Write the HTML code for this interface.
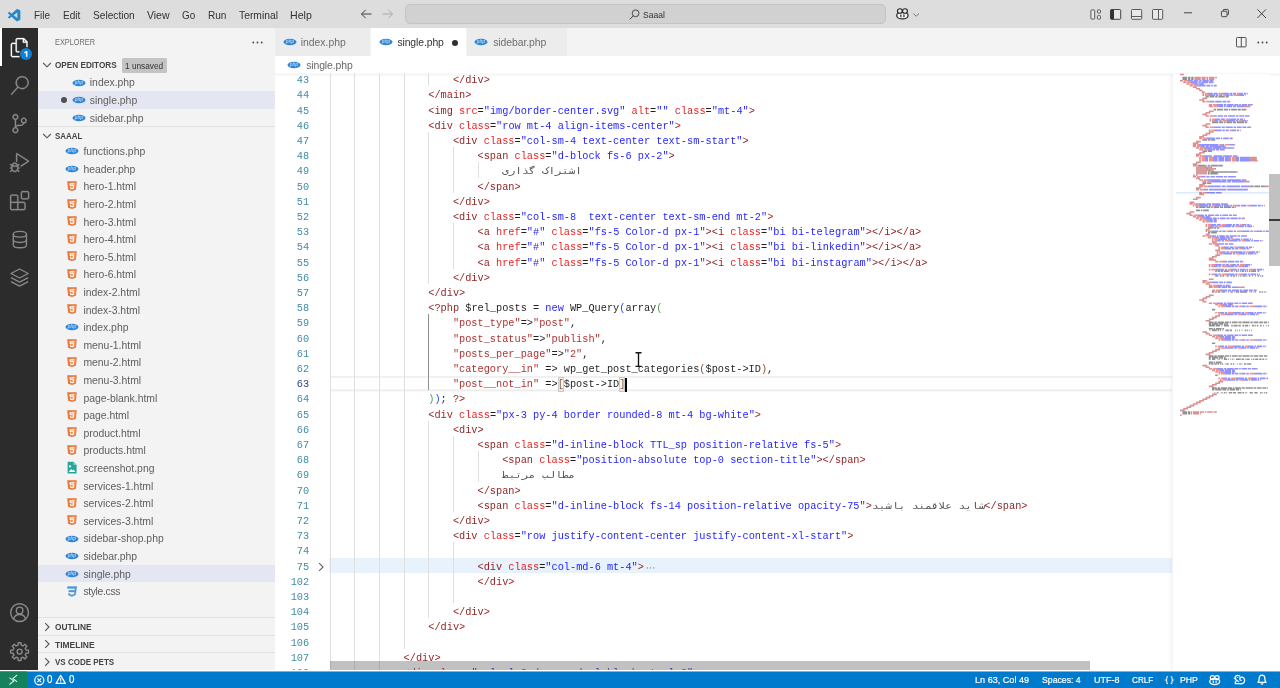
<!DOCTYPE html>
<html lang="en">
<head>
<meta charset="utf-8">
<title>single.php - Saaal - Visual Studio Code</title>
<style>
*{box-sizing:border-box;margin:0;padding:0}
html,body{width:1280px;height:688px;overflow:hidden;background:#fff}
body{font-family:"Liberation Sans",sans-serif;font-size:10.4px;color:#333;position:relative}
.abs{position:absolute}
svg{display:block;overflow:visible}
.ft{position:absolute;height:16px;line-height:16px;white-space:pre;transform-origin:0 50%;font-family:"Liberation Sans",sans-serif}
/* ---------- title bar ---------- */
#title{position:absolute;left:0;top:0;width:1280px;height:28px;background:#dddddd}
#cmd{position:absolute;left:405px;top:4.400px;width:481px;height:19.200px;background:#d1d1d1;border:1px solid #c4c4c4;border-radius:5px}
/* ---------- activity bar ---------- */
#act{position:absolute;left:0;top:28px;width:38px;height:642.400px;background:#2c2c2c}
#act .ind{position:absolute;left:0;top:0;width:2px;height:38.400px;background:#fff}
#act svg{position:absolute}
/* ---------- sidebar ---------- */
#side{position:absolute;left:38px;top:28px;width:237.200px;height:642.400px;background:#f3f3f3}
#sidewrap{position:absolute;left:0;top:0;width:1280px;height:688px}
.hline{position:absolute;left:38px;width:237.200px;height:1px;background:#e1e1e1}
.fn{position:absolute;height:17.600px;line-height:17.600px;font-size:10.400px;color:#5e5e5e;white-space:nowrap}
.fi{position:absolute}
.sel{position:absolute;left:38px;width:237.200px;height:17.600px;background:#e4e6f1}
.chev{position:absolute}
/* ---------- tabs ---------- */
#tabs{position:absolute;left:275.200px;top:28px;width:1004.800px;height:28px;background:#f3f3f3}
.tab{position:absolute;top:0;height:28px;background:#ececec;border-right:1px solid #f3f3f3}
.tab.on{background:#fff}
.tl{position:absolute;top:29.200px;height:28px;line-height:28px;font-size:10.400px;color:#6e6e6e;white-space:nowrap}
.tl.on{color:#333}
#bc{position:absolute;left:275.200px;top:56px;width:1004.800px;height:17px;background:#fff}
/* ---------- editor ---------- */
#ed{position:absolute;left:0;top:0;width:1280px;height:670.400px;overflow:hidden;clip-path:inset(73.400px 0 0 0)}
.ln{position:absolute;left:275.200px;width:34px;height:15.200px;line-height:15.200px;text-align:right;font-family:"Liberation Mono",monospace;font-size:10.270px;color:#237893;white-space:pre;opacity:.86}
.ln.cur{color:#0b216f}
.cl{position:absolute;height:15.200px;line-height:15.200px;font-family:"Liberation Mono",monospace;font-size:10.270px;white-space:pre;color:#000;opacity:.88}
.cl span{display:inline-block;height:15.200px;vertical-align:top}
.t{color:#800000}.a{color:#e50000}.s{color:#0000ff}.k{color:#0000ff}.p{color:#000}.r{color:#a31515}
.b1{color:#0431fa}.b2{color:#319331}.b3{color:#7b3814}
.bm{color:#7b3814;background:rgba(0,100,0,0.050);box-shadow:inset 0 0 0 1px #c4c4c4}
.arw{position:relative}
.ari{position:absolute;left:0;top:0;color:#3a3a3a;direction:rtl;unicode-bidi:isolate;font-size:9.300px;transform:scaleX(1.190);transform-origin:0 50%;white-space:pre}
.el{color:#8a8a8a}
.gd{position:absolute;width:1px;height:15.300px;background:#dfdfdf}
.gd.ga{background:#8f8f8f}
.curline{position:absolute;left:330.700px;width:841.800px;height:16px;margin-top:0.800px;background:linear-gradient(#efefef 0,#efefef 1px,#f2f2f2 1px,#f2f2f2 2px,rgba(255,255,255,0) 2px,rgba(255,255,255,0) 13px,#f5f5f5 13px,#f5f5f5 14px,#ededed 14px,#ededed 15px,#f9f9f9 15px,#f9f9f9 16px)}
.fold{position:absolute;left:329.200px;width:843.300px;height:15px;margin-top:0.600px;background:#e7f2fd}
</style>
</head>
<body>
<div id="root" style="position:absolute;left:0;top:0;width:1280px;height:688px;overflow:hidden;will-change:transform">
<svg width="0" height="0" style="position:absolute">
<defs>
<symbol id="ic-php" viewBox="0 0 14 14"><ellipse cx="7" cy="7" rx="6.500" ry="3.300" fill="#3384d2"/><text x="6.900" y="8.300" font-family="Liberation Sans, sans-serif" font-size="4.600" font-style="italic" font-weight="bold" fill="#a6d4fb" text-anchor="middle">php</text></symbol>
<symbol id="ic-html" viewBox="0 0 14 14"><path d="M2.200 1.300h9.600l-.9 8.400L7 11l-3.900-1.300z" fill="#e4773a"/><path d="M7 2.200h4l-.7 6.900L7 10.100z" fill="#ef8d52"/><path d="M9.400 3.300H4.500l.25 3h3.300l-.15 1.500-.9.300-.9-.3-.05-.7H5l.1 1.500 1.900.65 1.900-.65.350-3.400H5.750l-.1-.8h3.650z" fill="#fff"/></symbol>
<symbol id="ic-css" viewBox="0 0 14 14"><path d="M2.600 1.500h9.300l-1.400 8.500L6.800 11.600 3.300 10.100l.25-1.700h1.500l-.1.750 2 .85 2.200-.9.350-2.200H3.700l.25-1.600h5.800l.25-1.900H2.350z" fill="#4a9bd8" stroke="#4a9bd8" stroke-width=".35"/></symbol>
<symbol id="ic-png" viewBox="0 0 14 14"><path d="M2.600 .8h5.900l3.100 3.100v8.600H2.600z" fill="#26a69a"/><path d="M8.400 .8v3.200h3.200z" fill="#7fd0c7"/><path d="M3.800 10.900l2.300-3 1.500 1.700.9-1 1.900 2.300z" fill="#fff"/><circle cx="5" cy="5.400" r="1.050" fill="#fff"/></symbol>
<symbol id="chev-d" viewBox="0 0 10 10"><path d="M1.200 3l3.800 3.800L8.800 3" fill="none" stroke="#555" stroke-width="1.100"/></symbol>
<symbol id="chev-r" viewBox="0 0 10 10"><path d="M3.200 1.200L7 5 3.200 8.800" fill="none" stroke="#555" stroke-width="1.100"/></symbol>
</defs>
</svg>

<!-- TITLE BAR -->
<div id="title">
  <svg class="abs" style="left:8.300px;top:8.600px" width="12.400" height="12.400" viewBox="0 0 100 100"><path d="M96.500 10.800 75.900.900a6.200 6.200 0 0 0-7.100 1.200L29.400 38 12.200 25a4.200 4.200 0 0 0-5.300.2l-5.500 5a4.200 4.200 0 0 0 0 6.200L16.300 50 1.400 63.600a4.200 4.200 0 0 0 0 6.200l5.500 5a4.200 4.200 0 0 0 5.300.2l17.200-13 39.400 35.900a6.200 6.200 0 0 0 7.100 1.200l20.600-9.900a6.200 6.200 0 0 0 3.500-5.600V16.400a6.200 6.200 0 0 0-3.500-5.600zM75 72.700 45.100 50 75 27.300z" fill="#2489ca"/></svg>
  <!-- nav arrows -->
  <svg class="abs" style="left:360px;top:8px" width="34" height="12" viewBox="0 0 34 12"><path d="M1.500 6h10M5.700 1.800L1.500 6l4.200 4.200" fill="none" stroke="#424242" stroke-width="1"/><path d="M22.500 6h10M28.300 1.800L32.500 6l-4.200 4.200" fill="none" stroke="#a9a9a9" stroke-width="1"/></svg>
  <div id="cmd"></div>
  <!-- search icon -->
  <svg class="abs" style="left:629px;top:8.500px" width="11" height="11" viewBox="0 0 11 11"><circle cx="6.600" cy="4.300" r="3.400" fill="none" stroke="#3b3b3b" stroke-width="0.900"/><path d="M4.200 6.800L.8 10.400" stroke="#3b3b3b" stroke-width="0.900"/></svg>
  <!-- copilot -->
  <svg class="abs" style="left:896.4px;top:8.1px" width="12.8" height="11.5" viewBox="0 0 12.8 11.5"><ellipse cx="6.4" cy="7.4" rx="5.7" ry="3.5" fill="#f2f2f2" stroke="#262626" stroke-width="1.25"/><ellipse cx="3.85" cy="3" rx="2.45" ry="2.3" fill="#ecebe8" stroke="#262626" stroke-width="1.15"/><ellipse cx="8.95" cy="3" rx="2.45" ry="2.3" fill="#ecebe8" stroke="#262626" stroke-width="1.15"/><path d="M4.85 6.9v1.9M7.95 6.900v1.900" stroke="#262626" stroke-width="1.15" stroke-linecap="round"/></svg>
  <svg class="abs" style="left:912.6px;top:12.7px" width="6.4" height="4" viewBox="0 0 6.4 4"><path d="M.4.600l2.800 2.600L6 .6" fill="none" stroke="#666" stroke-width=".85"/></svg>
  <!-- layout controls -->
  <svg class="abs" style="left:1090px;top:8.5px" width="12" height="11" viewBox="0 0 12 11"><rect x=".9" y=".9" width="3.8" height="9.2" rx=".9" fill="#e9e9e9" stroke="#4a4a4a" stroke-width=".9"/><rect x="7.4" y=".9" width="3.1" height="3.1" rx=".8" fill="#e9e9e9" stroke="#4a4a4a" stroke-width=".9"/><rect x="7.4" y="6.600" width="3.100" height="3.500" rx=".8" fill="#e9e9e9" stroke="#4a4a4a" stroke-width=".9"/></svg>
  <svg class="abs" style="left:1110.4px;top:8.7px" width="11.2" height="10.8" viewBox="0 0 11.2 10.8"><rect x=".5" y=".5" width="10.2" height="9.8" rx=".9" fill="#e9e9e9" stroke="#3c3c3c" stroke-width=".95"/><path d="M.5 1.2q0-.7.7-.7h2.800v9.800H1.200q-.7 0-.7-.7z" fill="#333"/></svg>
  <svg class="abs" style="left:1131.2px;top:8.7px" width="11.2" height="10.8" viewBox="0 0 11.2 10.8"><rect x=".5" y=".5" width="10.2" height="9.8" rx=".9" fill="#e9e9e9" stroke="#4a4a4a" stroke-width=".9"/><path d="M.5 7.500h10.200" stroke="#4a4a4a" stroke-width=".9"/></svg>
  <svg class="abs" style="left:1152px;top:8.7px" width="11.2" height="10.8" viewBox="0 0 11.2 10.8"><rect x=".5" y=".5" width="10.2" height="9.8" rx=".9" fill="#e9e9e9" stroke="#4a4a4a" stroke-width=".9"/><path d="M6.500.5v9.800" stroke="#4a4a4a" stroke-width=".9"/></svg>
  <!-- window controls -->
  <svg class="abs" style="left:1184px;top:12.4px" width="8" height="2" viewBox="0 0 8 2"><path d="M0 .8h8" stroke="#333" stroke-width=".9"/></svg>
  <svg class="abs" style="left:1221px;top:9.4px" width="7.9" height="8.3" viewBox="0 0 9 9.5"><rect x=".5" y="2.5" width="6.300" height="6.300" rx="1" fill="none" stroke="#333" stroke-width="1"/><path d="M2.500 2.300V1.500a1 1 0 0 1 1-1h4a1 1 0 0 1 1 1v4.200a1 1 0 0 1-1 1h-.6" fill="none" stroke="#333" stroke-width="1"/></svg>
  <svg class="abs" style="left:1257.300px;top:9.300px" width="9.400" height="9.400" viewBox="0 0 9.400 9.400"><path d="M.4.400l8.600 8.600M9 .4L.4 9" stroke="#333" stroke-width=".9"/></svg>
</div>

<!-- ACTIVITY BAR -->
<div id="act"><div class="ind"></div>
  <!-- files -->
  <svg style="left:9.600px;top:9.600px" width="19.200" height="19.200" viewBox="0 0 24 24"><path fill="#fff" stroke="#fff" stroke-width="0.300" d="M17.500 0h-9L7 1.500V6H2.500L1 7.500v15.070L2.500 24h12.070L16 22.570V18h4.700l1.300-1.430V4.500L17.500 0zm0 2.120l2.380 2.380H17.500V2.120zm-3 20.380h-12v-15H7v9.070L8.500 18h6v4.500zm6-6h-12v-15H16V6h4.500v10.500z"/></svg>
  <div class="abs" style="left:18.600px;top:18.800px;width:14px;height:14px;border-radius:7px;background:#2c2c2c"></div>
  <div class="abs" style="left:19.6px;top:19.7px;width:12.2px;height:12.2px;border-radius:6.1px;background:#0f7fd4"></div>
  <svg style="left:0;top:0" width="38" height="40" viewBox="0 28 38 40"><path d="M25.9 50.900h1.500v5.800h-1.500v-4l-1.600.9v-1.350z" fill="#fff"/></svg>
  <!-- search -->
  <svg style="left:9.600px;top:48px" width="19.200" height="19.200" viewBox="0 0 24 24"><path fill="#8a8a8a" stroke="#8a8a8a" stroke-width="0.350" d="M15.250 0a8.250 8.250 0 0 0-6.180 13.720L1 22.880l1.120 1 8.050-9.120A8.251 8.251 0 1 0 15.250.010V0zm0 15a6.750 6.750 0 1 1 0-13.500 6.750 6.750 0 0 1 0 13.500z"/></svg>
  <!-- scm -->
  <svg style="left:9.600px;top:86.400px" width="19.200" height="19.200" viewBox="0 0 24 24"><path fill="#8a8a8a" stroke="#8a8a8a" stroke-width="0.350" d="M21.007 8.222A3.738 3.738 0 0 0 15.045 5.200a3.737 3.737 0 0 0 1.156 6.583 2.988 2.988 0 0 1-2.668 1.670h-2.990a4.456 4.456 0 0 0-2.989 1.165V7.400a3.737 3.737 0 1 0-1.494 0v9.117a3.776 3.776 0 1 0 1.816.099 2.990 2.990 0 0 1 2.668-1.667h2.990a4.484 4.484 0 0 0 4.223-3.039 3.736 3.736 0 0 0 3.250-3.687zM4.565 3.738a2.242 2.242 0 1 1 4.484 0 2.242 2.242 0 0 1-4.484 0zm4.484 16.441a2.242 2.242 0 1 1-4.484 0 2.242 2.242 0 0 1 4.484 0zm8.221-9.715a2.242 2.242 0 1 1 0-4.485 2.242 2.242 0 0 1 0 4.485z"/></svg>
  <!-- debug -->
  <svg style="left:9.600px;top:124.800px" width="19.200" height="19.200" viewBox="0 0 24 24"><path fill="#8a8a8a" stroke="#8a8a8a" stroke-width="0.350" d="M10.940 13.500l-1.320 1.320a3.730 3.730 0 0 0-7.240 0L1.060 13.500 0 14.560l1.720 1.720-.22.220V18H0v1.500h1.500v.080c.077.489.214.966.410 1.420L0 22.940 1.060 24l1.650-1.650A4.308 4.308 0 0 0 6 24a4.310 4.310 0 0 0 3.290-1.650L10.940 24 12 22.940 10.090 21c.198-.464.336-.951.410-1.450v-.1H12V18h-1.500v-1.500l-.22-.22L12 14.560l-1.060-1.060zM6 13.500a2.250 2.250 0 0 1 2.250 2.250h-4.500A2.250 2.250 0 0 1 6 13.500zm3 6a3.330 3.330 0 0 1-3 3 3.330 3.330 0 0 1-3-3v-2.250h6v2.250zm14.760-9.900v1.260L13.500 17.370V15.600l8.500-5.370L9 2v9.460a5.070 5.070 0 0 0-1.500-.72V.630L8.640 0l15.120 9.600z"/></svg>
  <!-- extensions -->
  <svg style="left:9.600px;top:163.200px" width="19.200" height="19.200" viewBox="0 0 24 24"><path fill="#8a8a8a" stroke="#8a8a8a" stroke-width="0.350" d="M13.500 1.500L15 0h7.500L24 1.500V9l-1.500 1.500H15L13.500 9V1.500zm1.500 0V9h7.500V1.500H15zM0 15V6l1.500-1.500H9L10.500 6v7.500H18l1.500 1.500v7.500L18 24H1.500L0 22.500V15zm9-1.500V6H1.500v7.500H9zM9 15H1.500v7.500H9V15zm1.500 7.500H18V15h-7.500v7.500z"/></svg>
  <!-- database -->
  <svg style="left:9.600px;top:201.600px" width="19.200" height="19.200" viewBox="0 0 19.200 19.200"><g fill="none" stroke="#8a8a8a" stroke-width="1.350"><ellipse cx="9.900" cy="4.300" rx="6.600" ry="2.900"/><path d="M3.300 4.300v10.600c0 1.600 2.950 2.900 6.600 2.900s6.600-1.300 6.600-2.900V4.300"/><path d="M3.300 9.600c0 1.600 2.950 2.900 6.600 2.900s6.600-1.300 6.600-2.900"/></g></svg>
  <!-- layers -->
  <svg style="left:9.600px;top:240px" width="19.200" height="19.200" viewBox="0 0 19.200 19.200"><g fill="none" stroke="#8a8a8a" stroke-width="1.350" stroke-linejoin="round"><path d="M9.600 1l8.600 4.500-8.600 4.500L1 5.500z"/><path d="M1 9.700l8.600 4.500 8.600-4.500"/><path d="M1 13.700l8.600 4.500 8.600-4.500"/></g></svg>
  <!-- account -->
  <svg style="left:9.600px;top:575px" width="19.200" height="19.200" viewBox="0 0 19.200 19.200"><g fill="none" stroke="#8a8a8a" stroke-width="1.400"><circle cx="9.600" cy="9.600" r="8.900"/><circle cx="9.600" cy="7.400" r="3.300"/><path d="M3.600 16.200c.7-3 3.100-4.700 6-4.700s5.300 1.700 6 4.700"/></g></svg>
  <!-- gear -->
  <svg style="left:9.600px;top:613.600px" width="19.200" height="19.200" viewBox="0 0 19.200 19.200"><path d="M8.06 3.18L8.17 0.71L11.03 0.71L11.14 3.18L13.05 3.97L14.87 2.30L16.90 4.33L15.23 6.15L16.02 8.06L18.49 8.17L18.49 11.03L16.02 11.14L15.23 13.05L16.90 14.87L14.87 16.90L13.05 15.23L11.14 16.02L11.03 18.49L8.17 18.49L8.06 16.02L6.15 15.23L4.33 16.90L2.30 14.87L3.97 13.05L3.18 11.14L0.71 11.03L0.71 8.17L3.18 8.06L3.97 6.15L2.30 4.33L4.33 2.30L6.15 3.97z" fill="none" stroke="#8a8a8a" stroke-width="1.4" stroke-linejoin="round"/><circle cx="9.6" cy="9.6" r="2.5" fill="none" stroke="#8a8a8a" stroke-width="1.4"/></svg>
</div>

<!-- SIDEBAR -->
<div id="side"></div>
<div id="sidewrap">
  <svg class="abs" style="left:251.500px;top:41px" width="11" height="3" viewBox="0 0 11 3"><circle cx="1.300" cy="1.500" r=".9" fill="#444"/><circle cx="5.500" cy="1.500" r=".9" fill="#444"/><circle cx="9.700" cy="1.500" r=".9" fill="#444"/></svg>
  <svg class="chev" style="left:41.500px;top:60px" width="10" height="10"><use href="#chev-d"/></svg>
  <div class="abs" style="left:121.800px;top:57.800px;width:45.100px;height:14.800px;background:#c4c4c4;border-radius:1.500px"></div>
  <div class="sel" style="top:91.200px"></div>
  <svg class="fi" style="left:71.800px;top:75.700px" width="14" height="14"><use href="#ic-php"/></svg>
  <svg class="fi" style="left:71.800px;top:93.300px" width="14" height="14"><use href="#ic-php"/></svg>
  <svg class="fi" style="left:71.800px;top:110.900px" width="14" height="14"><use href="#ic-php"/></svg>
  <div class="abs" style="left:60.600px;top:97px;width:6.400px;height:6.400px;border-radius:50%;background:#505050"></div>
  <div class="fn" style="top:74.200px;left:89.800px">index.php</div>
  <div class="fn" style="top:92px;left:89.800px">single.php</div>
  <div class="fn" style="top:109.500px;left:89.800px">sidebar.php</div>
  <div class="hline" style="top:126px"></div>
  <svg class="chev" style="left:41.500px;top:131.200px" width="10" height="10"><use href="#chev-d"/></svg>
<svg class="fi" style="left:65.00px;top:144.40px" width="14" height="14" viewBox="0 0 14 14"><use href="#ic-php"/></svg>
<div class="fn" style="top:143.20px;left:83.4px">functions.php</div>
<svg class="fi" style="left:65.00px;top:162.00px" width="14" height="14" viewBox="0 0 14 14"><use href="#ic-php"/></svg>
<div class="fn" style="top:160.80px;left:83.4px">header.php</div>
<svg class="fi" style="left:65.00px;top:179.90px" width="14" height="14" viewBox="0 0 14 14"><use href="#ic-html"/></svg>
<div class="fn" style="top:178.40px;left:83.4px">hero-1.html</div>
<svg class="fi" style="left:65.00px;top:197.50px" width="14" height="14" viewBox="0 0 14 14"><use href="#ic-html"/></svg>
<div class="fn" style="top:196.00px;left:83.4px">hero-2.html</div>
<svg class="fi" style="left:65.00px;top:215.10px" width="14" height="14" viewBox="0 0 14 14"><use href="#ic-html"/></svg>
<div class="fn" style="top:213.60px;left:83.4px">hero-3.html</div>
<svg class="fi" style="left:65.00px;top:232.70px" width="14" height="14" viewBox="0 0 14 14"><use href="#ic-html"/></svg>
<div class="fn" style="top:231.20px;left:83.4px">hero-4.html</div>
<svg class="fi" style="left:65.00px;top:250.30px" width="14" height="14" viewBox="0 0 14 14"><use href="#ic-html"/></svg>
<div class="fn" style="top:248.80px;left:83.4px">hero-5.html</div>
<svg class="fi" style="left:65.00px;top:267.90px" width="14" height="14" viewBox="0 0 14 14"><use href="#ic-html"/></svg>
<div class="fn" style="top:266.40px;left:83.4px">hero-6.html</div>
<svg class="fi" style="left:65.00px;top:285.50px" width="14" height="14" viewBox="0 0 14 14"><use href="#ic-html"/></svg>
<div class="fn" style="top:284.00px;left:83.4px">index-2.html</div>
<svg class="fi" style="left:65.00px;top:303.10px" width="14" height="14" viewBox="0 0 14 14"><use href="#ic-html"/></svg>
<div class="fn" style="top:301.60px;left:83.4px">index-3.html</div>
<svg class="fi" style="left:65.00px;top:320.40px" width="14" height="14" viewBox="0 0 14 14"><use href="#ic-php"/></svg>
<div class="fn" style="top:319.20px;left:83.4px">index.php</div>
<svg class="fi" style="left:65.00px;top:338.30px" width="14" height="14" viewBox="0 0 14 14"><use href="#ic-html"/></svg>
<div class="fn" style="top:336.80px;left:83.4px">menu-1.html</div>
<svg class="fi" style="left:65.00px;top:355.90px" width="14" height="14" viewBox="0 0 14 14"><use href="#ic-html"/></svg>
<div class="fn" style="top:354.40px;left:83.4px">menu-2.html</div>
<svg class="fi" style="left:65.00px;top:373.50px" width="14" height="14" viewBox="0 0 14 14"><use href="#ic-html"/></svg>
<div class="fn" style="top:372.00px;left:83.4px">menu-3.html</div>
<svg class="fi" style="left:65.00px;top:391.10px" width="14" height="14" viewBox="0 0 14 14"><use href="#ic-html"/></svg>
<div class="fn" style="top:389.60px;left:83.4px">page-blank.html</div>
<svg class="fi" style="left:65.00px;top:408.70px" width="14" height="14" viewBox="0 0 14 14"><use href="#ic-html"/></svg>
<div class="fn" style="top:407.20px;left:83.4px">page.html</div>
<svg class="fi" style="left:65.00px;top:426.30px" width="14" height="14" viewBox="0 0 14 14"><use href="#ic-html"/></svg>
<div class="fn" style="top:424.80px;left:83.4px">product.html</div>
<svg class="fi" style="left:65.00px;top:443.90px" width="14" height="14" viewBox="0 0 14 14"><use href="#ic-html"/></svg>
<div class="fn" style="top:442.40px;left:83.4px">products.html</div>
<svg class="fi" style="left:65.00px;top:461.20px" width="14" height="14" viewBox="0 0 14 14"><use href="#ic-png"/></svg>
<div class="fn" style="top:460.00px;left:83.4px">screenshot.png</div>
<svg class="fi" style="left:65.00px;top:479.10px" width="14" height="14" viewBox="0 0 14 14"><use href="#ic-html"/></svg>
<div class="fn" style="top:477.60px;left:83.4px">services-1.html</div>
<svg class="fi" style="left:65.00px;top:496.70px" width="14" height="14" viewBox="0 0 14 14"><use href="#ic-html"/></svg>
<div class="fn" style="top:495.20px;left:83.4px">services-2.html</div>
<svg class="fi" style="left:65.00px;top:514.30px" width="14" height="14" viewBox="0 0 14 14"><use href="#ic-html"/></svg>
<div class="fn" style="top:512.80px;left:83.4px">services-3.html</div>
<svg class="fi" style="left:65.00px;top:531.60px" width="14" height="14" viewBox="0 0 14 14"><use href="#ic-php"/></svg>
<div class="fn" style="top:530.40px;left:83.4px">sidebar-shop.php</div>
<svg class="fi" style="left:65.00px;top:549.20px" width="14" height="14" viewBox="0 0 14 14"><use href="#ic-php"/></svg>
<div class="fn" style="top:548.00px;left:83.4px">sidebar.php</div>
<div class="sel" style="top:564.90px;height:17.2px"></div>
<svg class="fi" style="left:65.00px;top:566.80px" width="14" height="14" viewBox="0 0 14 14"><use href="#ic-php"/></svg>
<div class="fn" style="top:565.60px;left:83.4px">single.php</div>
<svg class="fi" style="left:65.00px;top:584.90px" width="14" height="14" viewBox="0 0 14 14"><use href="#ic-css"/></svg>
<div class="fn" style="top:583.20px;left:83.4px;letter-spacing:-0.35px">style.css</div>
  <div class="hline" style="top:617.200px"></div>
  <svg class="chev" style="left:41.500px;top:621.600px" width="10" height="10"><use href="#chev-r"/></svg>
  <div class="hline" style="top:634.800px"></div>
  <svg class="chev" style="left:41.500px;top:639.200px" width="10" height="10"><use href="#chev-r"/></svg>
  <div class="hline" style="top:652.400px"></div>
  <svg class="chev" style="left:41.500px;top:656.800px" width="10" height="10"><use href="#chev-r"/></svg>
</div>

<!-- TABS -->
<div id="tabs">
  <div class="tab" style="left:0;width:95.800px"></div>
  <div class="tab on" style="left:95.800px;width:95.800px"></div>
  <div class="tab" style="left:191.600px;width:101.600px"></div>
  <svg class="abs" style="left:961px;top:8.800px" width="10.600" height="10.400" viewBox="0 0 10.600 10.400"><rect x=".5" y=".5" width="9.600" height="9.400" rx=".8" fill="none" stroke="#424242" stroke-width=".9"/><path d="M5.300.5v9.400" stroke="#424242" stroke-width=".9"/></svg>
  <svg class="abs" style="left:981.400px;top:12.600px" width="11" height="3" viewBox="0 0 11 3"><circle cx="1.300" cy="1.500" r=".9" fill="#424242"/><circle cx="5.500" cy="1.500" r=".9" fill="#424242"/><circle cx="9.700" cy="1.500" r=".9" fill="#424242"/></svg>
</div>
<svg class="fi" style="left:282.500px;top:35.300px" width="14" height="14"><use href="#ic-php"/></svg>
<div class="tl" style="left:300.700px">index.php</div>
<svg class="fi" style="left:378.500px;top:35.300px" width="14" height="14"><use href="#ic-php"/></svg>
<div class="tl on" style="left:397.400px;letter-spacing:-0.100px">single.php</div>
<div class="abs" style="left:452px;top:39.700px;width:6.200px;height:6.200px;border-radius:50%;background:#2f2f2f"></div>
<svg class="fi" style="left:474.300px;top:35.300px" width="14" height="14"><use href="#ic-php"/></svg>
<div class="tl" style="left:493.200px;letter-spacing:-0.060px">sidebar.php</div>
<div id="bc"></div>
<svg class="fi" style="left:287.300px;top:57.600px" width="14" height="14"><use href="#ic-php"/></svg>
<div class="tl" style="left:306.200px;top:57px;height:17.600px;line-height:17.600px;color:#666;letter-spacing:-0.100px">single.php</div>

<!-- EDITOR -->
<div id="ed">
<div class="curline" style="top:375.20px"></div>
<div class="fold" style="top:557.60px"></div>
<div class="ln" style="top:73.10px">43</div>
<i class="gd" style="left:329.70px;top:71.20px"></i>
<i class="gd" style="left:354.34px;top:71.20px"></i>
<i class="gd" style="left:378.98px;top:71.20px"></i>
<i class="gd" style="left:403.62px;top:71.20px"></i>
<i class="gd" style="left:428.26px;top:71.20px"></i>
<div class="cl" style="top:73.10px;left:452.90px"><span class="t">&lt;/div&gt;</span></div>
<div class="ln" style="top:88.30px">44</div>
<i class="gd" style="left:329.70px;top:86.40px"></i>
<i class="gd" style="left:354.34px;top:86.40px"></i>
<i class="gd" style="left:378.98px;top:86.40px"></i>
<i class="gd" style="left:403.62px;top:86.40px"></i>
<div class="cl" style="top:88.30px;left:428.26px"><span class="t">&lt;/main&gt;</span></div>
<div class="ln" style="top:103.50px">45</div>
<i class="gd" style="left:329.70px;top:101.60px"></i>
<i class="gd" style="left:354.34px;top:101.60px"></i>
<i class="gd" style="left:378.98px;top:101.60px"></i>
<i class="gd" style="left:403.62px;top:101.60px"></i>
<div class="cl" style="top:103.50px;left:428.26px"><span class="t">&lt;img</span><span class="p"> </span><span class="a">src</span><span class="p">=</span><span class="s">"img/border-center.svg"</span><span class="p"> </span><span class="a">alt</span><span class="p">=</span><span class="s">""</span><span class="p"> </span><span class="a">class</span><span class="p">=</span><span class="s">"mt-4"</span><span class="t">&gt;</span></div>
<div class="ln" style="top:118.70px">46</div>
<i class="gd" style="left:329.70px;top:116.80px"></i>
<i class="gd" style="left:354.34px;top:116.80px"></i>
<i class="gd" style="left:378.98px;top:116.80px"></i>
<i class="gd" style="left:403.62px;top:116.80px"></i>
<div class="cl" style="top:118.70px;left:428.26px"><span class="t">&lt;div</span><span class="p"> </span><span class="a">class</span><span class="p">=</span><span class="s">"row mt-4 align-items-center"</span><span class="t">&gt;</span></div>
<div class="ln" style="top:133.90px">47</div>
<i class="gd" style="left:329.70px;top:132.00px"></i>
<i class="gd" style="left:354.34px;top:132.00px"></i>
<i class="gd" style="left:378.98px;top:132.00px"></i>
<i class="gd" style="left:403.62px;top:132.00px"></i>
<i class="gd" style="left:428.26px;top:132.00px"></i>
<div class="cl" style="top:133.90px;left:452.90px"><span class="t">&lt;div</span><span class="p"> </span><span class="a">class</span><span class="p">=</span><span class="s">"col-sm-4 text-center text-sm-start"</span><span class="t">&gt;</span></div>
<div class="ln" style="top:149.10px">48</div>
<i class="gd" style="left:329.70px;top:147.20px"></i>
<i class="gd" style="left:354.34px;top:147.20px"></i>
<i class="gd" style="left:378.98px;top:147.20px"></i>
<i class="gd" style="left:403.62px;top:147.20px"></i>
<i class="gd" style="left:428.26px;top:147.20px"></i>
<i class="gd" style="left:452.90px;top:147.20px"></i>
<div class="cl" style="top:149.10px;left:477.54px"><span class="t">&lt;span</span><span class="p"> </span><span class="a">class</span><span class="p">=</span><span class="s">"d-block fs-6 px-2"</span><span class="t">&gt;</span></div>
<div class="ln" style="top:164.30px">49</div>
<i class="gd" style="left:329.70px;top:162.40px"></i>
<i class="gd" style="left:354.34px;top:162.40px"></i>
<i class="gd" style="left:378.98px;top:162.40px"></i>
<i class="gd" style="left:403.62px;top:162.40px"></i>
<i class="gd" style="left:428.26px;top:162.40px"></i>
<i class="gd" style="left:452.90px;top:162.40px"></i>
<i class="gd" style="left:477.54px;top:162.40px"></i>
<div class="cl" style="top:164.30px;left:502.18px"><span class="arw" style="width:78.8px"><span class="ari">اشتراک گذاری</span></span></div>
<div class="ln" style="top:179.50px">50</div>
<i class="gd" style="left:329.70px;top:177.60px"></i>
<i class="gd" style="left:354.34px;top:177.60px"></i>
<i class="gd" style="left:378.98px;top:177.60px"></i>
<i class="gd" style="left:403.62px;top:177.60px"></i>
<i class="gd" style="left:428.26px;top:177.60px"></i>
<i class="gd" style="left:452.90px;top:177.60px"></i>
<div class="cl" style="top:179.50px;left:477.54px"><span class="t">&lt;/span&gt;</span></div>
<div class="ln" style="top:194.70px">51</div>
<i class="gd" style="left:329.70px;top:192.80px"></i>
<i class="gd" style="left:354.34px;top:192.80px"></i>
<i class="gd" style="left:378.98px;top:192.80px"></i>
<i class="gd" style="left:403.62px;top:192.80px"></i>
<i class="gd" style="left:428.26px;top:192.80px"></i>
<div class="cl" style="top:194.70px;left:452.90px"><span class="t">&lt;/div&gt;</span></div>
<div class="ln" style="top:209.90px">52</div>
<i class="gd" style="left:329.70px;top:208.00px"></i>
<i class="gd" style="left:354.34px;top:208.00px"></i>
<i class="gd" style="left:378.98px;top:208.00px"></i>
<i class="gd" style="left:403.62px;top:208.00px"></i>
<i class="gd" style="left:428.26px;top:208.00px"></i>
<div class="cl" style="top:209.90px;left:452.90px"><span class="t">&lt;div</span><span class="p"> </span><span class="a">class</span><span class="p">=</span><span class="s">"col-sm-8  text-center text-sm-end mt-2"</span><span class="t">&gt;</span></div>
<div class="ln" style="top:225.10px">53</div>
<i class="gd" style="left:329.70px;top:223.20px"></i>
<i class="gd" style="left:354.34px;top:223.20px"></i>
<i class="gd" style="left:378.98px;top:223.20px"></i>
<i class="gd" style="left:403.62px;top:223.20px"></i>
<i class="gd" style="left:428.26px;top:223.20px"></i>
<i class="gd" style="left:452.90px;top:223.20px"></i>
<div class="cl" style="top:225.10px;left:477.54px"><span class="t">&lt;a</span><span class="p"> </span><span class="a">href</span><span class="p">=</span><span class="s">"#"</span><span class="p"> </span><span class="a">class</span><span class="p">=</span><span class="s">"fs-5 Color-d px-1"</span><span class="t">&gt;&lt;i</span><span class="p"> </span><span class="a">class</span><span class="p">=</span><span class="s">"bi bi-telegram"</span><span class="t">&gt;&lt;/i&gt;&lt;/a&gt;</span></div>
<div class="ln" style="top:240.30px">54</div>
<i class="gd" style="left:329.70px;top:238.40px"></i>
<i class="gd" style="left:354.34px;top:238.40px"></i>
<i class="gd" style="left:378.98px;top:238.40px"></i>
<i class="gd" style="left:403.62px;top:238.40px"></i>
<i class="gd" style="left:428.26px;top:238.40px"></i>
<i class="gd" style="left:452.90px;top:238.40px"></i>
<div class="cl" style="top:240.30px;left:477.54px"><span class="t">&lt;a</span><span class="p"> </span><span class="a">href</span><span class="p">=</span><span class="s">"#"</span><span class="p"> </span><span class="a">class</span><span class="p">=</span><span class="s">"fs-5 Color-d px-1"</span><span class="t">&gt;&lt;i</span><span class="p"> </span><span class="a">class</span><span class="p">=</span><span class="s">"bi bi-linkedin"</span><span class="t">&gt;&lt;/i&gt;&lt;/a&gt;</span></div>
<div class="ln" style="top:255.50px">55</div>
<i class="gd" style="left:329.70px;top:253.60px"></i>
<i class="gd" style="left:354.34px;top:253.60px"></i>
<i class="gd" style="left:378.98px;top:253.60px"></i>
<i class="gd" style="left:403.62px;top:253.60px"></i>
<i class="gd" style="left:428.26px;top:253.60px"></i>
<i class="gd" style="left:452.90px;top:253.60px"></i>
<div class="cl" style="top:255.50px;left:477.54px"><span class="t">&lt;a</span><span class="p"> </span><span class="a">href</span><span class="p">=</span><span class="s">"#"</span><span class="p"> </span><span class="a">class</span><span class="p">=</span><span class="s">"fs-5 Color-d px-1"</span><span class="t">&gt;&lt;i</span><span class="p"> </span><span class="a">class</span><span class="p">=</span><span class="s">"bi bi-instagram"</span><span class="t">&gt;&lt;/i&gt;&lt;/a&gt;</span></div>
<div class="ln" style="top:270.70px">56</div>
<i class="gd" style="left:329.70px;top:268.80px"></i>
<i class="gd" style="left:354.34px;top:268.80px"></i>
<i class="gd" style="left:378.98px;top:268.80px"></i>
<i class="gd" style="left:403.62px;top:268.80px"></i>
<i class="gd" style="left:428.26px;top:268.80px"></i>
<div class="cl" style="top:270.70px;left:452.90px"><span class="t">&lt;/div&gt;</span></div>
<div class="ln" style="top:285.90px">57</div>
<i class="gd" style="left:329.70px;top:284.00px"></i>
<i class="gd" style="left:354.34px;top:284.00px"></i>
<i class="gd" style="left:378.98px;top:284.00px"></i>
<i class="gd" style="left:403.62px;top:284.00px"></i>
<div class="cl" style="top:285.90px;left:428.26px"><span class="t">&lt;/div&gt;</span></div>
<div class="ln" style="top:301.10px">58</div>
<i class="gd" style="left:329.70px;top:299.20px"></i>
<i class="gd" style="left:354.34px;top:299.20px"></i>
<i class="gd" style="left:378.98px;top:299.20px"></i>
<i class="gd" style="left:403.62px;top:299.20px"></i>
<div class="cl" style="top:301.10px;left:428.26px"><span class="t">&lt;?php</span><span class="p"> $rel_posts = </span><span class="k">new</span><span class="p"> WP_Query</span><span class="b1">(</span><span class="p">array</span><span class="b2">(</span></div>
<div class="ln" style="top:316.30px">59</div>
<i class="gd" style="left:329.70px;top:314.40px"></i>
<i class="gd" style="left:354.34px;top:314.40px"></i>
<i class="gd" style="left:378.98px;top:314.40px"></i>
<i class="gd" style="left:403.62px;top:314.40px"></i>
<i class="gd ga" style="left:428.26px;top:314.40px"></i>
<div class="cl" style="top:316.30px;left:452.90px"><span class="r">"post_type"</span><span class="p">=&gt;</span><span class="r">"post"</span><span class="p">,</span></div>
<div class="ln" style="top:331.50px">60</div>
<i class="gd" style="left:329.70px;top:329.60px"></i>
<i class="gd" style="left:354.34px;top:329.60px"></i>
<i class="gd" style="left:378.98px;top:329.60px"></i>
<i class="gd" style="left:403.62px;top:329.60px"></i>
<i class="gd ga" style="left:428.26px;top:329.60px"></i>
<div class="cl" style="top:331.50px;left:452.90px"><span class="r">"post_status"</span><span class="p">=&gt;</span><span class="r">"publish"</span><span class="p">,</span></div>
<div class="ln" style="top:346.70px">61</div>
<i class="gd" style="left:329.70px;top:344.80px"></i>
<i class="gd" style="left:354.34px;top:344.80px"></i>
<i class="gd" style="left:378.98px;top:344.80px"></i>
<i class="gd" style="left:403.62px;top:344.80px"></i>
<i class="gd ga" style="left:428.26px;top:344.80px"></i>
<div class="cl" style="top:346.70px;left:452.90px"><span class="r">"posts_per_page"</span><span class="p">=&gt;</span><span class="r">"2"</span><span class="p">,</span></div>
<div class="ln" style="top:361.90px">62</div>
<i class="gd" style="left:329.70px;top:360.00px"></i>
<i class="gd" style="left:354.34px;top:360.00px"></i>
<i class="gd" style="left:378.98px;top:360.00px"></i>
<i class="gd" style="left:403.62px;top:360.00px"></i>
<i class="gd ga" style="left:428.26px;top:360.00px"></i>
<div class="cl" style="top:361.90px;left:452.90px"><span class="r">"category__in"</span><span class="p"> =&gt; wp_get_post_categories</span><span class="b3">(</span><span class="p">$post-&gt;ID</span><span class="b3">)</span><span class="p">,</span></div>
<div class="ln cur" style="top:377.10px">63</div>
<i class="gd" style="left:329.70px;top:375.20px"></i>
<i class="gd" style="left:354.34px;top:375.20px"></i>
<i class="gd" style="left:378.98px;top:375.20px"></i>
<i class="gd" style="left:403.62px;top:375.20px"></i>
<i class="gd ga" style="left:428.26px;top:375.20px"></i>
<div class="cl" style="top:377.10px;left:452.90px"><span class="r">"post__not_in"</span><span class="p"> =&gt;</span><span class="bm">[</span><span class="p">$post-&gt;ID</span><span class="bm">]</span></div>
<div class="ln" style="top:392.30px">64</div>
<i class="gd" style="left:329.70px;top:390.40px"></i>
<i class="gd" style="left:354.34px;top:390.40px"></i>
<i class="gd" style="left:378.98px;top:390.40px"></i>
<i class="gd" style="left:403.62px;top:390.40px"></i>
<div class="cl" style="top:392.30px;left:428.26px"><span class="b2">)</span><span class="b1">)</span><span class="p">; </span><span class="t">?&gt;</span></div>
<div class="ln" style="top:407.50px">65</div>
<i class="gd" style="left:329.70px;top:405.60px"></i>
<i class="gd" style="left:354.34px;top:405.60px"></i>
<i class="gd" style="left:378.98px;top:405.60px"></i>
<i class="gd" style="left:403.62px;top:405.60px"></i>
<div class="cl" style="top:407.50px;left:428.26px"><span class="t">&lt;div</span><span class="p"> </span><span class="a">class</span><span class="p">=</span><span class="s">"px-3 py-4 border rounded-8 mt-4 bg-white"</span><span class="t">&gt;</span></div>
<div class="ln" style="top:422.70px">66</div>
<i class="gd" style="left:329.70px;top:420.80px"></i>
<i class="gd" style="left:354.34px;top:420.80px"></i>
<i class="gd" style="left:378.98px;top:420.80px"></i>
<i class="gd" style="left:403.62px;top:420.80px"></i>
<i class="gd" style="left:428.26px;top:420.80px"></i>
<div class="cl" style="top:422.70px;left:452.90px"><span class="t">&lt;div&gt;</span></div>
<div class="ln" style="top:437.90px">67</div>
<i class="gd" style="left:329.70px;top:436.00px"></i>
<i class="gd" style="left:354.34px;top:436.00px"></i>
<i class="gd" style="left:378.98px;top:436.00px"></i>
<i class="gd" style="left:403.62px;top:436.00px"></i>
<i class="gd" style="left:428.26px;top:436.00px"></i>
<i class="gd" style="left:452.90px;top:436.00px"></i>
<div class="cl" style="top:437.90px;left:477.54px"><span class="t">&lt;span</span><span class="p"> </span><span class="a">class</span><span class="p">=</span><span class="s">"d-inline-block TTL_sp position-relative fs-5"</span><span class="t">&gt;</span></div>
<div class="ln" style="top:453.10px">68</div>
<i class="gd" style="left:329.70px;top:451.20px"></i>
<i class="gd" style="left:354.34px;top:451.20px"></i>
<i class="gd" style="left:378.98px;top:451.20px"></i>
<i class="gd" style="left:403.62px;top:451.20px"></i>
<i class="gd" style="left:428.26px;top:451.20px"></i>
<i class="gd" style="left:452.90px;top:451.20px"></i>
<i class="gd" style="left:477.54px;top:451.20px"></i>
<div class="cl" style="top:453.10px;left:502.18px"><span class="t">&lt;span</span><span class="p"> </span><span class="a">class</span><span class="p">=</span><span class="s">"position-absolute top-0 section-title"</span><span class="t">&gt;&lt;/span&gt;</span></div>
<div class="ln" style="top:468.30px">69</div>
<i class="gd" style="left:329.70px;top:466.40px"></i>
<i class="gd" style="left:354.34px;top:466.40px"></i>
<i class="gd" style="left:378.98px;top:466.40px"></i>
<i class="gd" style="left:403.62px;top:466.40px"></i>
<i class="gd" style="left:428.26px;top:466.40px"></i>
<i class="gd" style="left:452.90px;top:466.40px"></i>
<i class="gd" style="left:477.54px;top:466.40px"></i>
<div class="cl" style="top:468.30px;left:502.18px"><span class="arw" style="width:73.0px"><span class="ari">مطالب مرتبط</span></span></div>
<div class="ln" style="top:483.50px">70</div>
<i class="gd" style="left:329.70px;top:481.60px"></i>
<i class="gd" style="left:354.34px;top:481.60px"></i>
<i class="gd" style="left:378.98px;top:481.60px"></i>
<i class="gd" style="left:403.62px;top:481.60px"></i>
<i class="gd" style="left:428.26px;top:481.60px"></i>
<i class="gd" style="left:452.90px;top:481.60px"></i>
<div class="cl" style="top:483.50px;left:477.54px"><span class="t">&lt;/span&gt;</span></div>
<div class="ln" style="top:498.70px">71</div>
<i class="gd" style="left:329.70px;top:496.80px"></i>
<i class="gd" style="left:354.34px;top:496.80px"></i>
<i class="gd" style="left:378.98px;top:496.80px"></i>
<i class="gd" style="left:403.62px;top:496.80px"></i>
<i class="gd" style="left:428.26px;top:496.80px"></i>
<i class="gd" style="left:452.90px;top:496.80px"></i>
<div class="cl" style="top:498.70px;left:477.54px"><span class="t">&lt;span</span><span class="p"> </span><span class="a">class</span><span class="p">=</span><span class="s">"d-inline-block fs-14 position-relative opacity-75"</span><span class="t">&gt;</span><span class="arw" style="width:112.5px"><span class="ari">شاید علاقمند باشید</span></span><span class="t">&lt;/span&gt;</span></div>
<div class="ln" style="top:513.90px">72</div>
<i class="gd" style="left:329.70px;top:512.00px"></i>
<i class="gd" style="left:354.34px;top:512.00px"></i>
<i class="gd" style="left:378.98px;top:512.00px"></i>
<i class="gd" style="left:403.62px;top:512.00px"></i>
<i class="gd" style="left:428.26px;top:512.00px"></i>
<div class="cl" style="top:513.90px;left:452.90px"><span class="t">&lt;/div&gt;</span></div>
<div class="ln" style="top:529.10px">73</div>
<i class="gd" style="left:329.70px;top:527.20px"></i>
<i class="gd" style="left:354.34px;top:527.20px"></i>
<i class="gd" style="left:378.98px;top:527.20px"></i>
<i class="gd" style="left:403.62px;top:527.20px"></i>
<i class="gd" style="left:428.26px;top:527.20px"></i>
<div class="cl" style="top:529.10px;left:452.90px"><span class="t">&lt;div</span><span class="p"> </span><span class="a">class</span><span class="p">=</span><span class="s">"row justify-content-center justify-content-xl-start"</span><span class="t">&gt;</span></div>
<div class="ln" style="top:544.30px">74</div>
<i class="gd" style="left:329.70px;top:542.40px"></i>
<i class="gd" style="left:354.34px;top:542.40px"></i>
<i class="gd" style="left:378.98px;top:542.40px"></i>
<i class="gd" style="left:403.62px;top:542.40px"></i>
<i class="gd" style="left:428.26px;top:542.40px"></i>
<i class="gd" style="left:452.90px;top:542.40px"></i>
<div class="ln" style="top:559.50px">75</div>
<i class="gd" style="left:329.70px;top:557.60px"></i>
<i class="gd" style="left:354.34px;top:557.60px"></i>
<i class="gd" style="left:378.98px;top:557.60px"></i>
<i class="gd" style="left:403.62px;top:557.60px"></i>
<i class="gd" style="left:428.26px;top:557.60px"></i>
<i class="gd" style="left:452.90px;top:557.60px"></i>
<div class="cl" style="top:559.50px;left:477.54px"><span class="t">&lt;div</span><span class="p"> </span><span class="a">class</span><span class="p">=</span><span class="s">"col-md-6 mt-4"</span><span class="t">&gt;</span><span class="el"><svg width="12" height="15.2" viewBox="0 0 12 15.2"><circle cx="3.3" cy="7.9" r=".65" fill="#6a6a6a"/><circle cx="6.6" cy="7.900" r=".65" fill="#6a6a6a"/><circle cx="9.9" cy="7.900" r=".65" fill="#6a6a6a"/></svg></span></div>
<div class="ln" style="top:574.70px">102</div>
<i class="gd" style="left:329.70px;top:572.80px"></i>
<i class="gd" style="left:354.34px;top:572.80px"></i>
<i class="gd" style="left:378.98px;top:572.80px"></i>
<i class="gd" style="left:403.62px;top:572.80px"></i>
<i class="gd" style="left:428.26px;top:572.80px"></i>
<i class="gd" style="left:452.90px;top:572.80px"></i>
<div class="cl" style="top:574.70px;left:477.54px"><span class="t">&lt;/div&gt;</span></div>
<div class="ln" style="top:589.90px">103</div>
<i class="gd" style="left:329.70px;top:588.00px"></i>
<i class="gd" style="left:354.34px;top:588.00px"></i>
<i class="gd" style="left:378.98px;top:588.00px"></i>
<i class="gd" style="left:403.62px;top:588.00px"></i>
<i class="gd" style="left:428.26px;top:588.00px"></i>
<i class="gd" style="left:452.90px;top:588.00px"></i>
<div class="ln" style="top:605.10px">104</div>
<i class="gd" style="left:329.70px;top:603.20px"></i>
<i class="gd" style="left:354.34px;top:603.20px"></i>
<i class="gd" style="left:378.98px;top:603.20px"></i>
<i class="gd" style="left:403.62px;top:603.20px"></i>
<i class="gd" style="left:428.26px;top:603.20px"></i>
<div class="cl" style="top:605.10px;left:452.90px"><span class="t">&lt;/div&gt;</span></div>
<div class="ln" style="top:620.30px">105</div>
<i class="gd" style="left:329.70px;top:618.40px"></i>
<i class="gd" style="left:354.34px;top:618.40px"></i>
<i class="gd" style="left:378.98px;top:618.40px"></i>
<i class="gd" style="left:403.62px;top:618.40px"></i>
<div class="cl" style="top:620.30px;left:428.26px"><span class="t">&lt;/div&gt;</span></div>
<div class="ln" style="top:635.50px">106</div>
<i class="gd" style="left:329.70px;top:633.60px"></i>
<i class="gd" style="left:354.34px;top:633.60px"></i>
<i class="gd" style="left:378.98px;top:633.60px"></i>
<i class="gd" style="left:403.62px;top:633.60px"></i>
<div class="ln" style="top:650.70px">107</div>
<i class="gd" style="left:329.70px;top:648.80px"></i>
<i class="gd" style="left:354.34px;top:648.80px"></i>
<i class="gd" style="left:378.98px;top:648.80px"></i>
<div class="cl" style="top:650.70px;left:403.62px"><span class="t">&lt;/div&gt;</span></div>
<div class="ln" style="top:665.90px">108</div>
<i class="gd" style="left:329.70px;top:664.00px"></i>
<i class="gd" style="left:354.34px;top:664.00px"></i>
<i class="gd" style="left:378.98px;top:664.00px"></i>
<div class="cl" style="top:665.90px;left:403.62px"><span class="t">&lt;div</span><span class="p"> </span><span class="a">class</span><span class="p">=</span><span class="s">"col-xl-3 d-none d-xl-block mt-xl-6"</span><span class="t">&gt;</span></div>
  <!-- fold chevron -->
  <svg class="abs" style="left:317.200px;top:561.500px" width="8" height="10" viewBox="0 0 8 10"><path d="M2.100 1.100L6.100 5 2.100 8.900" fill="none" stroke="#5f5f5f" stroke-width="1.050"/></svg>
  <!-- text caret -->
  <div class="abs" style="left:625.300px;top:377.500px;width:1.500px;height:14px;background:#000"></div>
  <!-- mouse I-beam -->
  <svg class="abs" style="left:634.500px;top:351.500px" width="7" height="15" viewBox="0 0 7 15"><path d="M.5.700h2.200q.8 0 .8.800v12q0 .8-.8.800H.5M6.500.700H4.300q-.8 0-.8.800M3.500 13.500q0 .8.800.8h2.200" fill="none" stroke="#111" stroke-width="1.350"/></svg>
  <!-- top shadow under breadcrumbs -->
  <div class="abs" style="left:275.200px;top:73.400px;width:1004.800px;height:3.500px;background:linear-gradient(rgba(200,200,200,0.280),rgba(221,221,221,0))"></div>
<div class="abs" style="left:1173px;top:73.600px;width:96.200px;height:597px;background:#fff;box-shadow:-2px 0 4px rgba(0,0,0,0.055)"></div>
<svg class="abs" style="left:0;top:0" width="1280" height="688" viewBox="0 0 1280 688">
<rect x="1176" y="191.90" width="93" height="1.7" fill="#dcecfb"/>
<path d="M1180.0 74.4h4.0M1194.4 77.6h6.4M1201.6 77.6h4.0M1206.4 77.6h1.6M1208.8 77.6h5.6M1215.2 77.6h1.6M1194.4 79.2h6.4M1201.6 79.2h4.0M1206.4 79.2h1.6M1208.8 79.2h5.6M1180.0 80.8h3.2M1212.8 80.8h0.8M1183.2 82.4h3.2M1212.8 82.4h0.8M1186.4 84.0h3.2M1203.2 84.0h0.8M1189.6 85.6h3.2M1216.0 85.6h0.8M1192.8 87.2h4.0M1196.0 88.8h4.0M1199.2 90.4h3.2M1201.6 92.0h3.2M1202.4 93.6h1.6M1247.2 93.6h0.8M1202.4 95.2h1.6M1244.8 95.2h0.8M1202.4 98.4h4.8M1199.2 100.0h4.8M1202.4 101.6h3.2M1229.6 101.6h0.8M1208.8 104.8h3.2M1252.0 104.8h0.8M1208.8 106.4h4.0M1244.0 106.4h0.8M1244.8 106.4h5.6M1208.8 111.2h4.8M1205.6 112.8h4.8M1202.4 114.4h4.8M1205.6 116.0h3.2M1248.8 116.0h0.8M1209.6 119.2h1.6M1244.0 119.2h0.8M1209.6 120.8h1.6M1247.2 120.8h0.8M1205.6 124.0h4.8M1202.4 125.6h4.8M1205.6 127.2h3.2M1250.4 127.2h0.8M1208.8 130.4h1.6M1240.0 130.4h0.8M1208.8 132.0h4.8M1205.6 133.6h4.8M1202.4 135.2h4.8M1199.2 136.8h4.8M1199.2 138.4h3.2M1232.0 138.4h0.8M1196.0 141.6h4.8M1192.8 143.2h5.6M1192.8 144.8h3.2M1234.4 144.8h0.8M1192.8 146.4h3.2M1224.8 146.4h0.8M1196.0 148.0h3.2M1233.6 148.0h0.8M1199.2 149.6h4.0M1224.0 149.6h0.8M1199.2 152.8h5.6M1196.0 154.4h4.8M1196.0 156.0h3.2M1236.8 156.0h0.8M1199.2 157.6h1.6M1228.8 157.6h2.4M1249.6 157.6h7.2M1199.2 159.2h1.6M1228.8 159.2h2.4M1249.6 159.2h7.2M1199.2 160.8h1.6M1228.8 160.8h2.4M1250.4 160.8h7.2M1196.0 162.4h4.8M1192.8 164.0h4.8M1192.8 165.6h4.0M1196.0 175.2h1.6M1192.8 176.8h3.2M1235.2 176.8h0.8M1196.0 178.4h4.0M1199.2 180.0h4.0M1245.6 180.0h0.8M1202.4 181.6h4.0M1243.2 181.6h6.4M1199.2 184.8h5.6M1199.2 186.4h4.0M1249.6 186.4h0.8M1264.8 186.4h4.0M1196.0 188.0h4.8M1196.0 189.6h3.2M1247.2 189.6h0.8M1199.2 192.8h3.2M1220.0 192.8h0.8M1199.2 194.4h4.8M1196.0 197.6h4.8M1192.8 199.2h4.8M1189.6 202.4h4.8M1189.6 204.0h3.2M1227.2 204.0h0.8M1192.8 205.6h1.6M1264.0 205.6h0.8M1189.6 212.0h4.8M1186.4 213.6h4.8M1189.6 215.2h3.2M1236.0 215.2h0.8M1192.8 216.8h3.2M1209.6 216.8h0.8M1196.0 218.4h3.2M1244.0 218.4h0.8M1199.2 220.0h3.2M1216.0 220.0h0.8M1202.4 221.6h2.4M1216.0 221.6h0.8M1205.6 224.8h1.6M1250.4 224.8h0.8M1205.6 226.4h1.6M1252.8 226.4h0.8M1205.6 229.6h4.0M1205.6 231.2h1.6M1205.6 234.4h4.0M1202.4 236.0h3.2M1246.4 236.0h0.8M1208.0 237.6h3.2M1232.0 237.6h0.8M1212.0 239.2h1.6M1252.0 239.2h0.8M1212.0 240.8h1.6M1262.4 240.8h0.8M1212.0 242.4h4.8M1208.8 244.0h3.2M1232.8 244.0h0.8M1215.2 245.6h4.0M1218.4 247.2h1.6M1252.8 247.2h0.8M1218.4 248.8h1.6M1249.6 248.8h0.8M1215.2 250.4h4.8M1216.8 252.0h1.6M1259.2 252.0h0.8M1216.8 253.6h1.6M1256.8 253.6h0.8M1215.2 255.2h4.8M1212.0 256.8h4.8M1208.8 258.4h4.8M1208.8 260.0h7.2M1215.2 261.6h3.2M1242.4 261.6h0.8M1208.8 264.8h1.6M1251.2 264.8h0.8M1208.8 266.4h1.6M1248.8 266.4h0.8M1208.8 269.6h1.6M1263.2 269.6h0.8M1208.8 274.4h1.6M1259.2 274.4h0.8M1208.8 279.2h4.8M1202.4 280.8h4.8M1202.4 282.4h3.2M1231.2 282.4h0.8M1205.6 284.0h4.0M1208.8 285.6h3.2M1229.6 285.6h0.8M1208.8 287.2h4.0M1238.4 287.2h0.8M1239.2 287.2h5.6M1212.0 290.4h3.2M1256.0 290.4h0.8M1208.8 295.2h4.8M1205.6 296.8h4.8M1202.4 298.4h4.8M1199.2 300.0h4.8M1202.4 301.6h4.0M1208.8 303.2h3.2M1252.0 303.2h0.8M1215.2 304.8h3.2M1232.0 304.8h0.8M1218.4 306.4h1.6M1266.4 306.4h0.8M1215.2 312.8h1.6M1265.6 312.8h0.8M1218.4 314.4h1.6M1258.4 314.4h0.8M1215.2 316.0h4.8M1212.0 317.6h4.8M1208.8 319.2h4.8M1205.6 320.8h4.8M1202.4 332.0h4.8M1205.6 333.6h4.0M1208.8 335.2h3.2M1252.0 335.2h0.8M1212.0 336.8h3.2M1234.4 336.8h0.8M1215.2 338.4h3.2M1234.4 338.4h0.8M1218.4 340.0h1.6M1266.4 340.0h0.8M1215.2 346.4h1.6M1265.6 346.4h0.8M1218.4 348.0h1.6M1258.4 348.0h0.8M1215.2 349.6h4.8M1212.0 351.2h4.8M1208.8 352.8h4.8M1205.6 354.4h4.8M1202.4 365.6h4.8M1205.6 367.2h4.0M1208.8 368.8h3.2M1256.8 368.8h0.8M1212.0 370.4h3.2M1234.4 370.4h0.8M1215.2 372.0h3.2M1234.4 372.0h0.8M1218.4 373.6h1.6M1266.4 373.6h0.8M1218.4 378.4h1.6M1220.0 380.0h1.6M1260.0 380.0h0.8M1218.4 381.6h4.8M1215.2 383.2h4.8M1212.0 384.8h4.8M1208.8 386.4h4.8M1212.0 394.4h4.8M1208.8 396.0h4.8M1205.6 397.6h4.8M1202.4 399.2h4.8M1199.2 400.8h4.8M1196.0 402.4h4.8M1192.8 404.0h4.8M1189.6 405.6h4.8M1186.4 407.2h4.8M1183.2 408.8h4.8M1180.0 410.4h4.8M1192.8 412.0h6.4M1200.0 412.0h4.0M1204.8 412.0h1.6M1207.2 412.0h5.6M1213.6 412.0h3.2M1192.8 413.6h6.4M1200.0 413.6h0.8M1180.0 415.2h1.6" stroke="#a80000" stroke-width="1.6" stroke-opacity="0.43" fill="none"/>
<path d="M1182.4 77.6h4.8M1188.0 77.6h2.4M1191.2 77.6h2.4M1182.4 79.2h4.8M1188.0 79.2h2.4M1191.2 79.2h2.4M1188.0 80.8h0.8M1191.2 82.4h0.8M1194.4 84.0h0.8M1197.6 85.6h0.8M1208.0 93.6h0.8M1222.4 93.6h0.8M1239.2 93.6h0.8M1208.8 95.2h0.8M1225.6 95.2h0.8M1238.4 95.2h0.8M1205.6 96.8h3.2M1209.6 96.8h4.8M1215.2 96.8h2.4M1218.4 96.8h6.4M1225.6 96.8h3.2M1210.4 101.6h0.8M1216.8 104.8h0.8M1217.6 106.4h0.8M1213.6 109.6h2.4M1216.8 109.6h6.4M1224.0 109.6h4.0M1228.8 109.6h1.6M1231.2 109.6h5.6M1237.6 109.6h3.2M1241.6 109.6h4.8M1213.6 116.0h0.8M1215.2 119.2h0.8M1229.6 119.2h0.8M1214.4 120.8h0.8M1227.2 120.8h0.8M1242.4 120.8h0.8M1212.0 122.4h6.4M1219.2 122.4h4.0M1224.0 122.4h1.6M1226.4 122.4h5.6M1232.8 122.4h3.2M1236.8 122.4h7.2M1244.8 122.4h2.4M1213.6 127.2h0.8M1215.2 130.4h0.8M1232.0 130.4h0.8M1207.2 138.4h0.8M1202.4 140.0h4.8M1208.0 140.0h2.4M1211.2 140.0h4.0M1199.2 144.8h0.8M1221.6 144.8h0.8M1228.8 144.8h0.8M1200.8 146.4h0.8M1204.0 148.0h0.8M1208.0 149.6h0.8M1202.4 151.2h4.8M1208.0 151.2h4.0M1204.0 156.0h0.8M1204.8 157.6h0.8M1212.8 157.6h0.8M1236.0 157.6h0.8M1204.8 159.2h0.8M1212.8 159.2h0.8M1236.0 159.2h0.8M1204.8 160.8h0.8M1212.8 160.8h0.8M1236.0 160.8h0.8M1197.6 165.6h8.0M1206.4 165.6h0.8M1211.2 165.6h6.4M1218.4 165.6h4.0M1204.8 167.2h1.6M1211.2 167.2h0.8M1206.4 168.8h1.6M1215.2 168.8h0.8M1208.8 170.4h1.6M1212.8 170.4h0.8M1208.0 172.0h1.6M1210.4 172.0h17.6M1228.8 172.0h7.2M1236.8 172.0h0.8M1208.0 173.6h1.6M1210.4 173.6h7.2M1194.4 175.2h0.8M1200.8 176.8h0.8M1208.0 180.0h0.8M1211.2 181.6h0.8M1202.4 183.2h4.0M1207.2 183.2h4.0M1208.0 186.4h0.8M1250.4 186.4h3.2M1254.4 186.4h5.6M1260.8 186.4h4.0M1204.0 189.6h0.8M1207.2 192.8h0.8M1220.8 192.8h0.8M1197.6 204.0h0.8M1200.0 205.6h0.8M1215.2 205.6h0.8M1236.8 205.6h0.8M1249.6 205.6h0.8M1196.0 207.2h2.4M1199.2 207.2h6.4M1206.4 207.2h4.0M1211.2 207.2h1.6M1213.6 207.2h5.6M1220.0 207.2h3.2M1224.0 207.2h7.2M1232.0 207.2h2.4M1235.2 207.2h0.8M1196.0 210.4h4.0M1200.8 210.4h1.6M1203.2 210.4h5.6M1197.6 215.2h0.8M1200.8 216.8h0.8M1204.0 218.4h0.8M1207.2 220.0h0.8M1209.6 221.6h0.8M1211.2 224.8h0.8M1225.6 224.8h0.8M1242.4 224.8h0.8M1210.4 226.4h0.8M1223.2 226.4h0.8M1238.4 226.4h0.8M1208.0 228.0h4.8M1213.6 228.0h2.4M1216.8 228.0h2.4M1212.0 231.2h0.8M1228.8 231.2h0.8M1241.6 231.2h0.8M1256.8 231.2h0.8M1208.0 232.8h2.4M1211.2 232.8h5.6M1210.4 236.0h0.8M1216.0 237.6h0.8M1219.2 239.2h0.8M1234.4 239.2h0.8M1216.8 240.8h0.8M1229.6 240.8h0.8M1244.8 240.8h0.8M1216.8 244.0h0.8M1224.0 247.2h0.8M1238.4 247.2h0.8M1224.8 248.8h0.8M1241.6 248.8h0.8M1221.6 252.0h0.8M1234.4 252.0h0.8M1249.6 252.0h0.8M1224.0 253.6h0.8M1239.2 253.6h0.8M1223.2 261.6h0.8M1215.2 264.8h0.8M1232.0 264.8h0.8M1244.8 264.8h0.8M1213.6 266.4h0.8M1226.4 266.4h0.8M1241.6 266.4h0.8M1216.0 269.6h0.8M1231.2 269.6h0.8M1252.8 269.6h0.8M1215.2 271.2h1.6M1217.6 271.2h2.4M1220.8 271.2h2.4M1224.0 271.2h4.8M1229.6 271.2h0.8M1231.2 271.2h1.6M1234.4 271.2h0.8M1236.0 271.2h1.6M1238.4 271.2h0.8M1240.0 271.2h0.8M1241.6 271.2h2.4M1244.8 271.2h1.6M1247.2 271.2h0.8M1248.8 271.2h1.6M1251.2 271.2h4.8M1257.6 271.2h1.6M1213.6 274.4h0.8M1226.4 274.4h0.8M1241.6 274.4h0.8M1215.2 276.0h3.2M1220.0 276.0h1.6M1222.4 276.0h1.6M1225.6 276.0h0.8M1227.2 276.0h1.6M1230.4 276.0h1.6M1232.8 276.0h2.4M1236.0 276.0h0.8M1238.4 276.0h0.8M1240.0 276.0h0.8M1241.6 276.0h0.8M1243.2 276.0h2.4M1246.4 276.0h0.8M1248.8 276.0h1.6M1252.0 276.0h0.8M1255.2 276.0h0.8M1257.6 276.0h1.6M1260.0 276.0h0.8M1261.6 276.0h1.6M1210.4 282.4h0.8M1216.8 285.6h0.8M1217.6 287.2h0.8M1220.0 290.4h0.8M1212.0 292.0h2.4M1215.2 292.0h1.6M1217.6 292.0h2.4M1220.8 292.0h0.8M1222.4 292.0h2.4M1225.6 292.0h0.8M1228.0 292.0h0.8M1230.4 292.0h2.4M1234.4 292.0h0.8M1236.0 292.0h3.2M1240.0 292.0h7.2M1249.6 292.0h0.8M1251.2 292.0h0.8M1253.6 292.0h0.8M1255.2 292.0h0.8M1259.2 292.0h1.6M1261.6 292.0h1.6M1264.0 292.0h0.8M1265.6 292.0h0.8M1216.8 303.2h0.8M1223.2 304.8h0.8M1224.8 306.4h0.8M1241.6 306.4h0.8M1254.4 306.4h0.8M1212.0 309.6h3.2M1220.0 312.8h0.8M1232.8 312.8h0.8M1248.0 312.8h0.8M1225.6 314.4h0.8M1240.8 314.4h0.8M1208.8 322.4h4.8M1214.4 322.4h2.4M1217.6 322.4h6.4M1224.8 322.4h4.0M1229.6 322.4h1.6M1232.0 322.4h5.6M1238.4 322.4h3.2M1242.4 322.4h7.2M1250.4 322.4h2.4M1253.6 322.4h4.8M1259.2 322.4h4.0M1264.0 322.4h3.2M1268.0 322.4h0.8M1208.8 324.0h2.4M1212.0 324.0h6.4M1219.2 324.0h4.0M1224.0 324.0h1.6M1226.4 324.0h1.6M1208.8 325.6h6.4M1216.0 325.6h4.0M1221.6 325.6h0.8M1224.0 325.6h4.8M1231.2 325.6h1.6M1233.6 325.6h4.0M1238.4 325.6h2.4M1242.4 325.6h1.6M1244.8 325.6h3.2M1248.8 325.6h0.8M1252.0 325.6h2.4M1255.2 325.6h0.8M1256.8 325.6h1.6M1260.0 325.6h1.6M1263.2 325.6h0.8M1266.4 325.6h0.8M1268.0 325.6h0.8M1208.8 328.8h4.0M1213.6 328.8h1.6M1216.0 328.8h5.6M1222.4 328.8h1.6M1209.6 330.4h0.8M1212.0 330.4h4.8M1217.6 330.4h1.6M1220.0 330.4h0.8M1222.4 330.4h0.8M1225.6 330.4h3.2M1229.6 330.4h2.4M1235.2 330.4h0.8M1236.8 330.4h0.8M1239.2 330.4h0.8M1241.6 330.4h0.8M1244.8 330.4h1.6M1247.2 330.4h0.8M1248.8 330.4h0.8M1251.2 330.4h0.8M1216.8 335.2h0.8M1220.0 336.8h0.8M1223.2 338.4h0.8M1224.8 340.0h0.8M1241.6 340.0h0.8M1254.4 340.0h0.8M1212.0 343.2h3.2M1220.0 346.4h0.8M1232.8 346.4h0.8M1248.0 346.4h0.8M1225.6 348.0h0.8M1240.8 348.0h0.8M1208.8 356.0h4.8M1214.4 356.0h2.4M1217.6 356.0h6.4M1224.8 356.0h4.0M1229.6 356.0h1.6M1232.0 356.0h5.6M1238.4 356.0h3.2M1242.4 356.0h7.2M1250.4 356.0h2.4M1253.6 356.0h4.8M1259.2 356.0h4.0M1264.0 356.0h3.2M1208.8 357.6h2.4M1212.0 357.6h6.4M1219.2 357.6h4.0M1224.0 357.6h1.6M1208.8 359.2h1.6M1212.0 359.2h3.2M1217.6 359.2h0.8M1219.2 359.2h0.8M1221.6 359.2h0.8M1224.0 359.2h3.2M1228.0 359.2h0.8M1230.4 359.2h0.8M1232.0 359.2h0.8M1233.6 359.2h0.8M1236.0 359.2h4.8M1241.6 359.2h2.4M1244.8 359.2h0.8M1246.4 359.2h3.2M1251.2 359.2h0.8M1252.8 359.2h1.6M1255.2 359.2h3.2M1259.2 359.2h2.4M1262.4 359.2h1.6M1264.8 359.2h0.8M1266.4 359.2h0.8M1208.8 362.4h4.0M1213.6 362.4h1.6M1216.0 362.4h5.6M1208.8 364.0h1.6M1211.2 364.0h2.4M1214.4 364.0h2.4M1217.6 364.0h1.6M1220.0 364.0h0.8M1221.6 364.0h1.6M1224.8 364.0h0.8M1226.4 364.0h2.4M1230.4 364.0h1.6M1232.8 364.0h1.6M1236.8 364.0h0.8M1239.2 364.0h1.6M1241.6 364.0h0.8M1244.0 364.0h2.4M1247.2 364.0h4.0M1216.8 368.8h0.8M1220.0 370.4h0.8M1223.2 372.0h0.8M1224.8 373.6h0.8M1241.6 373.6h0.8M1254.4 373.6h0.8M1215.2 375.2h2.4M1223.2 378.4h0.8M1236.0 378.4h0.8M1251.2 378.4h0.8M1227.2 380.0h0.8M1242.4 380.0h0.8M1212.0 388.0h4.8M1217.6 388.0h2.4M1220.8 388.0h6.4M1228.0 388.0h4.0M1232.8 388.0h1.6M1235.2 388.0h5.6M1241.6 388.0h3.2M1245.6 388.0h7.2M1253.6 388.0h2.4M1256.8 388.0h4.8M1262.4 388.0h4.0M1267.2 388.0h0.8M1212.0 389.6h2.4M1215.2 389.6h6.4M1222.4 389.6h4.0M1227.2 389.6h1.6M1229.6 389.6h5.6M1236.0 389.6h3.2M1240.0 389.6h0.8M1214.4 392.8h0.8M1216.8 392.8h1.6M1220.8 392.8h0.8M1222.4 392.8h0.8M1224.0 392.8h1.6M1226.4 392.8h0.8M1228.8 392.8h3.2M1232.8 392.8h3.2M1237.6 392.8h4.0M1242.4 392.8h1.6M1244.8 392.8h0.8M1246.4 392.8h0.8M1249.6 392.8h3.2M1254.4 392.8h3.2M1260.0 392.8h1.6M1262.4 392.8h0.8M1264.0 392.8h0.8M1265.6 392.8h1.6M1182.4 412.0h4.8M1188.0 412.0h2.4M1191.2 412.0h0.8M1182.4 413.6h4.8M1188.0 413.6h2.4M1191.2 413.6h0.8" stroke="#000000" stroke-width="1.6" stroke-opacity="0.43" fill="none"/>
<path d="M1184.0 80.8h4.0M1187.2 82.4h4.0M1190.4 84.0h4.0M1193.6 85.6h4.0M1204.8 93.6h3.2M1218.4 93.6h4.0M1236.8 93.6h2.4M1204.8 95.2h4.0M1223.2 95.2h2.4M1233.6 95.2h4.8M1206.4 101.6h4.0M1212.8 104.8h4.0M1213.6 106.4h4.0M1209.6 116.0h4.0M1212.0 119.2h3.2M1225.6 119.2h4.0M1212.0 120.8h2.4M1222.4 120.8h4.8M1239.2 120.8h3.2M1209.6 127.2h4.0M1211.2 130.4h4.0M1229.6 130.4h2.4M1203.2 138.4h4.0M1196.8 144.8h2.4M1219.2 144.8h2.4M1224.8 144.8h4.0M1196.8 146.4h4.0M1200.0 148.0h4.0M1204.0 149.6h4.0M1200.0 156.0h4.0M1201.6 157.6h3.2M1208.8 157.6h4.0M1232.0 157.6h4.0M1201.6 159.2h3.2M1208.8 159.2h4.0M1232.0 159.2h4.0M1201.6 160.8h3.2M1208.8 160.8h4.0M1232.0 160.8h4.0M1196.8 176.8h4.0M1204.0 180.0h4.0M1207.2 181.6h4.0M1204.0 186.4h4.0M1200.0 189.6h4.0M1203.2 192.8h4.0M1193.6 204.0h4.0M1195.2 205.6h4.8M1212.0 205.6h3.2M1232.8 205.6h4.0M1247.2 205.6h2.4M1193.6 215.2h4.0M1196.8 216.8h4.0M1200.0 218.4h4.0M1203.2 220.0h4.0M1205.6 221.6h4.0M1208.0 224.8h3.2M1221.6 224.8h4.0M1240.0 224.8h2.4M1208.0 226.4h2.4M1218.4 226.4h4.8M1235.2 226.4h3.2M1208.0 231.2h4.0M1226.4 231.2h2.4M1236.8 231.2h4.8M1253.6 231.2h3.2M1206.4 236.0h4.0M1212.0 237.6h4.0M1214.4 239.2h4.8M1231.2 239.2h3.2M1214.4 240.8h2.4M1224.8 240.8h4.8M1241.6 240.8h3.2M1212.8 244.0h4.0M1220.8 247.2h3.2M1234.4 247.2h4.0M1220.8 248.8h4.0M1239.2 248.8h2.4M1219.2 252.0h2.4M1229.6 252.0h4.8M1246.4 252.0h3.2M1219.2 253.6h4.8M1236.0 253.6h3.2M1219.2 261.6h4.0M1211.2 264.8h4.0M1229.6 264.8h2.4M1240.0 264.8h4.8M1211.2 266.4h2.4M1221.6 266.4h4.8M1238.4 266.4h3.2M1211.2 269.6h4.8M1228.0 269.6h3.2M1248.8 269.6h4.0M1211.2 274.4h2.4M1221.6 274.4h4.8M1238.4 274.4h3.2M1206.4 282.4h4.0M1212.8 285.6h4.0M1213.6 287.2h4.0M1216.0 290.4h4.0M1212.8 303.2h4.0M1219.2 304.8h4.0M1220.8 306.4h4.0M1239.2 306.4h2.4M1249.6 306.4h4.8M1217.6 312.8h2.4M1228.0 312.8h4.8M1244.8 312.8h3.2M1220.8 314.4h4.8M1237.6 314.4h3.2M1212.8 335.2h4.0M1216.0 336.8h4.0M1219.2 338.4h4.0M1220.8 340.0h4.0M1239.2 340.0h2.4M1249.6 340.0h4.8M1217.6 346.4h2.4M1228.0 346.4h4.8M1244.8 346.4h3.2M1220.8 348.0h4.8M1237.6 348.0h3.2M1212.8 368.8h4.0M1216.0 370.4h4.0M1219.2 372.0h4.0M1220.8 373.6h4.0M1239.2 373.6h2.4M1249.6 373.6h4.8M1220.8 378.4h2.4M1231.2 378.4h4.8M1248.0 378.4h3.2M1222.4 380.0h4.8M1239.2 380.0h3.2" stroke="#e50000" stroke-width="1.6" stroke-opacity="0.43" fill="none"/>
<path d="M1188.8 80.8h4.0M1193.6 80.8h4.8M1199.2 80.8h2.4M1202.4 80.8h6.4M1209.6 80.8h3.2M1192.0 82.4h5.6M1198.4 82.4h2.4M1201.6 82.4h6.4M1208.8 82.4h4.0M1195.2 84.0h3.2M1199.2 84.0h4.0M1198.4 85.6h7.2M1206.4 85.6h4.0M1211.2 85.6h1.6M1213.6 85.6h2.4M1208.8 93.6h4.0M1213.6 93.6h4.0M1223.2 93.6h5.6M1229.6 93.6h2.4M1232.8 93.6h3.2M1240.0 93.6h3.2M1244.0 93.6h2.4M1209.6 95.2h5.6M1216.0 95.2h2.4M1219.2 95.2h3.2M1226.4 95.2h3.2M1230.4 95.2h2.4M1239.2 95.2h4.8M1211.2 101.6h3.2M1215.2 101.6h6.4M1222.4 101.6h4.0M1227.2 101.6h2.4M1217.6 104.8h5.6M1224.0 104.8h2.4M1227.2 104.8h6.4M1234.4 104.8h4.0M1239.2 104.8h1.6M1241.6 104.8h5.6M1248.0 104.8h4.0M1218.4 106.4h4.8M1224.0 106.4h1.6M1226.4 106.4h5.6M1232.8 106.4h3.2M1236.8 106.4h7.2M1214.4 116.0h2.4M1217.6 116.0h5.6M1224.0 116.0h3.2M1228.0 116.0h7.2M1236.0 116.0h2.4M1239.2 116.0h4.8M1244.8 116.0h4.0M1216.0 119.2h4.0M1220.8 119.2h4.0M1230.4 119.2h5.6M1236.8 119.2h2.4M1240.0 119.2h3.2M1215.2 120.8h3.2M1219.2 120.8h2.4M1228.0 120.8h7.2M1236.0 120.8h2.4M1243.2 120.8h3.2M1214.4 127.2h6.4M1221.6 127.2h3.2M1225.6 127.2h7.2M1233.6 127.2h2.4M1236.8 127.2h4.8M1242.4 127.2h4.0M1247.2 127.2h3.2M1216.0 130.4h5.6M1222.4 130.4h2.4M1225.6 130.4h3.2M1232.8 130.4h3.2M1236.8 130.4h2.4M1208.0 138.4h7.2M1216.0 138.4h4.0M1220.8 138.4h1.6M1223.2 138.4h5.6M1229.6 138.4h2.4M1200.0 144.8h18.4M1222.4 144.8h1.6M1229.6 144.8h4.8M1201.6 146.4h3.2M1205.6 146.4h3.2M1209.6 146.4h15.2M1204.8 148.0h7.2M1212.8 148.0h8.8M1222.4 148.0h11.2M1208.8 149.6h6.4M1216.0 149.6h3.2M1220.0 149.6h4.0M1204.8 156.0h7.2M1213.6 156.0h8.8M1223.2 156.0h8.8M1232.8 156.0h4.0M1205.6 157.6h2.4M1213.6 157.6h4.0M1218.4 157.6h5.6M1224.8 157.6h4.0M1236.8 157.6h2.4M1240.0 157.6h9.6M1205.6 159.2h2.4M1213.6 159.2h4.0M1218.4 159.2h5.6M1224.8 159.2h4.0M1236.8 159.2h2.4M1240.0 159.2h9.6M1205.6 160.8h2.4M1213.6 160.8h4.0M1218.4 160.8h5.6M1224.8 160.8h4.0M1236.8 160.8h2.4M1240.0 160.8h10.4M1208.0 165.6h2.4M1201.6 176.8h4.0M1206.4 176.8h3.2M1210.4 176.8h4.8M1216.0 176.8h7.2M1224.0 176.8h3.2M1228.0 176.8h7.2M1208.8 180.0h12.0M1221.6 180.0h4.8M1227.2 180.0h13.6M1241.6 180.0h4.0M1212.0 181.6h14.4M1227.2 181.6h4.0M1232.0 181.6h11.2M1208.8 186.4h12.0M1221.6 186.4h4.0M1226.4 186.4h13.6M1240.8 186.4h8.8M1204.8 189.6h3.2M1208.8 189.6h17.6M1227.2 189.6h20.0M1208.0 192.8h7.2M1216.0 192.8h4.0M1198.4 204.0h7.2M1206.4 204.0h4.8M1212.0 204.0h8.0M1220.8 204.0h6.4M1200.8 205.6h7.2M1208.8 205.6h2.4M1216.0 205.6h4.8M1221.6 205.6h1.6M1224.0 205.6h5.6M1230.4 205.6h1.6M1237.6 205.6h2.4M1240.8 205.6h5.6M1250.4 205.6h6.4M1257.6 205.6h3.2M1261.6 205.6h1.6M1198.4 215.2h5.6M1204.8 215.2h2.4M1208.0 215.2h6.4M1215.2 215.2h4.0M1220.0 215.2h1.6M1222.4 215.2h5.6M1228.8 215.2h3.2M1232.8 215.2h3.2M1201.6 216.8h3.2M1205.6 216.8h4.0M1204.8 218.4h7.2M1212.8 218.4h4.0M1217.6 218.4h1.6M1220.0 218.4h5.6M1226.4 218.4h3.2M1230.4 218.4h7.2M1238.4 218.4h2.4M1241.6 218.4h2.4M1208.0 220.0h4.8M1213.6 220.0h2.4M1210.4 221.6h2.4M1213.6 221.6h2.4M1212.0 224.8h4.0M1216.8 224.8h4.0M1226.4 224.8h5.6M1232.8 224.8h2.4M1236.0 224.8h3.2M1243.2 224.8h3.2M1247.2 224.8h2.4M1211.2 226.4h3.2M1215.2 226.4h2.4M1224.0 226.4h7.2M1232.0 226.4h2.4M1239.2 226.4h4.8M1244.8 226.4h1.6M1247.2 226.4h4.8M1212.8 231.2h5.6M1219.2 231.2h2.4M1222.4 231.2h3.2M1229.6 231.2h3.2M1233.6 231.2h2.4M1242.4 231.2h7.2M1250.4 231.2h2.4M1257.6 231.2h4.8M1263.2 231.2h1.6M1265.6 231.2h3.2M1211.2 236.0h4.8M1216.8 236.0h1.6M1219.2 236.0h5.6M1225.6 236.0h3.2M1229.6 236.0h7.2M1237.6 236.0h2.4M1240.8 236.0h5.6M1216.8 237.6h2.4M1220.0 237.6h5.6M1226.4 237.6h3.2M1230.4 237.6h1.6M1220.0 239.2h7.2M1228.0 239.2h2.4M1235.2 239.2h4.8M1240.8 239.2h1.6M1243.2 239.2h5.6M1249.6 239.2h1.6M1217.6 240.8h3.2M1221.6 240.8h2.4M1230.4 240.8h7.2M1238.4 240.8h2.4M1245.6 240.8h4.8M1251.2 240.8h1.6M1253.6 240.8h5.6M1260.0 240.8h1.6M1217.6 244.0h6.4M1224.8 244.0h3.2M1228.8 244.0h4.0M1224.8 247.2h4.0M1229.6 247.2h4.0M1239.2 247.2h5.6M1245.6 247.2h2.4M1248.8 247.2h3.2M1225.6 248.8h5.6M1232.0 248.8h2.4M1235.2 248.8h3.2M1242.4 248.8h3.2M1246.4 248.8h2.4M1222.4 252.0h3.2M1226.4 252.0h2.4M1235.2 252.0h7.2M1243.2 252.0h2.4M1250.4 252.0h4.8M1256.0 252.0h2.4M1224.8 253.6h7.2M1232.8 253.6h2.4M1240.0 253.6h4.8M1245.6 253.6h1.6M1248.0 253.6h5.6M1254.4 253.6h1.6M1224.0 261.6h3.2M1228.0 261.6h6.4M1235.2 261.6h4.0M1240.0 261.6h2.4M1216.0 264.8h5.6M1222.4 264.8h2.4M1225.6 264.8h3.2M1232.8 264.8h3.2M1236.8 264.8h2.4M1245.6 264.8h4.8M1214.4 266.4h3.2M1218.4 266.4h2.4M1227.2 266.4h7.2M1235.2 266.4h2.4M1242.4 266.4h5.6M1216.8 269.6h7.2M1224.8 269.6h2.4M1232.0 269.6h4.8M1237.6 269.6h1.6M1240.0 269.6h5.6M1246.4 269.6h1.6M1253.6 269.6h2.4M1256.8 269.6h5.6M1214.4 274.4h3.2M1218.4 274.4h2.4M1227.2 274.4h7.2M1235.2 274.4h2.4M1242.4 274.4h4.8M1248.0 274.4h1.6M1250.4 274.4h5.6M1256.8 274.4h1.6M1211.2 282.4h7.2M1219.2 282.4h4.0M1224.0 282.4h1.6M1226.4 282.4h4.8M1217.6 285.6h4.8M1223.2 285.6h1.6M1225.6 285.6h4.0M1218.4 287.2h2.4M1221.6 287.2h5.6M1228.0 287.2h3.2M1232.0 287.2h6.4M1220.8 290.4h6.4M1228.0 290.4h3.2M1232.0 290.4h7.2M1240.0 290.4h2.4M1243.2 290.4h4.8M1248.8 290.4h4.0M1253.6 290.4h2.4M1217.6 303.2h5.6M1224.0 303.2h2.4M1227.2 303.2h6.4M1234.4 303.2h4.0M1239.2 303.2h1.6M1241.6 303.2h5.6M1248.0 303.2h4.0M1224.0 304.8h3.2M1228.0 304.8h4.0M1225.6 306.4h5.6M1232.0 306.4h2.4M1235.2 306.4h3.2M1242.4 306.4h3.2M1246.4 306.4h2.4M1255.2 306.4h7.2M1263.2 306.4h2.4M1220.8 312.8h3.2M1224.8 312.8h2.4M1233.6 312.8h7.2M1241.6 312.8h2.4M1248.8 312.8h4.8M1254.4 312.8h1.6M1256.8 312.8h5.6M1263.2 312.8h1.6M1226.4 314.4h7.2M1234.4 314.4h2.4M1241.6 314.4h4.8M1247.2 314.4h1.6M1249.6 314.4h5.6M1256.0 314.4h1.6M1217.6 335.2h5.6M1224.0 335.2h2.4M1227.2 335.2h6.4M1234.4 335.2h4.0M1239.2 335.2h1.6M1241.6 335.2h5.6M1248.0 335.2h4.0M1220.8 336.8h3.2M1224.8 336.8h6.4M1232.0 336.8h2.4M1224.0 338.4h7.2M1232.0 338.4h2.4M1225.6 340.0h5.6M1232.0 340.0h2.4M1235.2 340.0h3.2M1242.4 340.0h3.2M1246.4 340.0h2.4M1255.2 340.0h7.2M1263.2 340.0h2.4M1220.8 346.4h3.2M1224.8 346.4h2.4M1233.6 346.4h7.2M1241.6 346.4h2.4M1248.8 346.4h4.8M1254.4 346.4h1.6M1256.8 346.4h5.6M1263.2 346.4h1.6M1226.4 348.0h7.2M1234.4 348.0h2.4M1241.6 348.0h4.8M1247.2 348.0h1.6M1249.6 348.0h5.6M1256.0 348.0h1.6M1217.6 368.8h5.6M1224.0 368.8h2.4M1227.2 368.8h6.4M1234.4 368.8h4.0M1239.2 368.8h1.6M1241.6 368.8h5.6M1248.0 368.8h3.2M1252.0 368.8h4.8M1220.8 370.4h3.2M1224.8 370.4h6.4M1232.0 370.4h2.4M1224.0 372.0h7.2M1232.0 372.0h2.4M1225.6 373.6h5.6M1232.0 373.6h2.4M1235.2 373.6h3.2M1242.4 373.6h3.2M1246.4 373.6h2.4M1255.2 373.6h7.2M1263.2 373.6h2.4M1224.0 378.4h3.2M1228.0 378.4h2.4M1236.8 378.4h7.2M1244.8 378.4h2.4M1252.0 378.4h4.8M1257.6 378.4h1.6M1260.0 378.4h5.6M1266.4 378.4h1.6M1228.0 380.0h7.2M1236.0 380.0h2.4M1243.2 380.0h4.8M1248.8 380.0h1.6M1251.2 380.0h5.6M1257.6 380.0h1.6" stroke="#0000ff" stroke-width="1.6" stroke-opacity="0.43" fill="none"/>
<path d="M1217.6 165.6h0.8M1193.6 175.2h0.8" stroke="#0431fa" stroke-width="1.6" stroke-opacity="0.43" fill="none"/>
<path d="M1222.4 165.6h0.8M1209.6 173.6h0.8M1217.6 173.6h0.8M1192.8 175.2h0.8" stroke="#319331" stroke-width="1.6" stroke-opacity="0.43" fill="none"/>
<path d="M1196.0 167.2h8.8M1206.4 167.2h4.8M1196.0 168.8h10.4M1208.0 168.8h7.2M1196.0 170.4h12.8M1210.4 170.4h2.4M1196.0 172.0h11.2M1196.0 173.6h11.2" stroke="#b01515" stroke-width="1.6" stroke-opacity="0.43" fill="none"/>
<path d="M1228.0 172.0h0.8M1236.0 172.0h0.8" stroke="#7b3814" stroke-width="1.6" stroke-opacity="0.43" fill="none"/>
</svg>
  <!-- v scrollbar slider + overview ruler cursor -->
  <div class="abs" style="left:1269.200px;top:174px;width:10.800px;height:91.600px;background:#c1c1c1"></div>
  <div class="abs" style="left:1269.200px;top:218.800px;width:10.800px;height:1.800px;background:#3a3a3a"></div>
  <!-- h scrollbar -->
  <div class="abs" style="left:329.700px;top:661px;width:760.300px;height:9.500px;background:rgba(100,100,100,0.400)"></div>
</div>

<!-- STATUS BAR -->
<div class="abs" id="status" style="left:0;top:670.5px;width:1280px;height:18px;background:linear-gradient(rgba(0,122,204,0.550) 0,rgba(0,122,204,0.550) 1px,#007acc 1px)">
  <div class="abs" style="left:0;top:0;width:27.200px;height:18px;background:linear-gradient(rgba(22,130,93,0.550) 0,rgba(22,130,93,0.550) 1px,#16825d 1px)"></div>
  <svg class="abs" style="left:8px;top:3.5px" width="12" height="12" viewBox="0 0 12 12"><path d="M1.4 3.6L5.9 7 1.4 10.5M9.2 1L4.9 4.4 9.2 7.8" fill="none" stroke="#d4f3e5" stroke-width="1.05"/></svg>
  <!-- error -->
  <svg class="abs" style="left:33.760px;top:4.1px" width="10.600" height="10.600" viewBox="0 0 10.600 10.600"><circle cx="5.300" cy="5.300" r="4.550" fill="none" stroke="#fff" stroke-width="1.250"/><path d="M3.400 3.400l3.800 3.800M7.200 3.400L3.400 7.200" stroke="#fff" stroke-width="1.200"/></svg>
  <!-- warning -->
  <svg class="abs" style="left:55.200px;top:3.7px" width="11.400" height="10.600" viewBox="0 0 11.400 10.600"><path d="M5.700 1.200L10.300 9.400H1.100z" fill="none" stroke="#fff" stroke-width="1.250" stroke-linejoin="round"/><path d="M5.700 4v3M5.700 7.600v1" stroke="#fff" stroke-width="1.100"/></svg>
  <!-- braces -->
  <svg class="abs" style="left:1165.4px;top:5.6px" width="8.8" height="8.2" viewBox="0 0 10 10"><path d="M3.300.7c-1.300 0-1.500.5-1.500 1.500v1.400c0 .8-.4 1.200-1.100 1.400.7.200 1.100.6 1.100 1.400v1.400c0 1 .2 1.500 1.500 1.500M6.700.7c1.300 0 1.500.5 1.500 1.500v1.400c0 .8.400 1.200 1.100 1.400-.7.200-1.100.6-1.100 1.400v1.400c0 1-.2 1.500-1.500 1.500" fill="none" stroke="#fff" stroke-width="1.25"/></svg>
  <!-- copilot -->
  <svg class="abs" style="left:1208.8px;top:4.1px" width="11.4" height="10.2" viewBox="0 0 12.8 11.500"><ellipse cx="6.4" cy="7.4" rx="5.6" ry="3.5" fill="none" stroke="#fff" stroke-width="1.5"/><ellipse cx="3.85" cy="3" rx="2.4" ry="2.2" fill="none" stroke="#fff" stroke-width="1.400"/><ellipse cx="8.95" cy="3" rx="2.4" ry="2.2" fill="none" stroke="#fff" stroke-width="1.400"/><path d="M4.85 6.9v1.9M7.95 6.900v1.900" stroke="#fff" stroke-width="1.300" stroke-linecap="round"/></svg>
  <!-- pets icon -->
  <svg class="abs" style="left:1232.6px;top:3.9px" width="12.4" height="10.6" viewBox="0 0 12.4 10.6"><path d="M6.9 9.700c3 .3 4.700-1 4.700-3.300 0-1.900-1.200-3.200-2.800-3.200-1.200 0-2 .8-2 1.800 0 .8.500 1.400 1.300 1.400" fill="none" stroke="#fff" stroke-width="1.3" stroke-linecap="round"/><path d="M6.9 9.700H2.300c-.2-1.500.3-2.600 1.300-3.400C2.700 5.800 2.200 5 2.200 4c0-1.500 1.100-2.700 2.600-2.700.7 0 1.300.3 1.800.7" fill="none" stroke="#fff" stroke-width="1.3" stroke-linecap="round"/><path d="M1.200 4.200h1.500M4.300 6.700l1.400.9" stroke="#fff" stroke-width="1.1" stroke-linecap="round"/><circle cx="4.6" cy="3.500" r=".55" fill="#fff"/></svg>
  <!-- bell -->
  <svg class="abs" style="left:1257.4px;top:3.6px" width="10" height="11" viewBox="0 0 10 11"><path d="M1 8.300c.9-.8 1.100-1.600 1.100-3.400C2.100 2.700 3.300 1.100 5 1.100s2.900 1.600 2.900 3.800c0 1.800.2 2.600 1.100 3.400z" fill="none" stroke="#fff" stroke-width="1.3" stroke-linejoin="round"/><path d="M3.900 9.500c.2.500.6.700 1.100.7s.9-.2 1.100-.7" fill="none" stroke="#fff" stroke-width="1.200"/></svg>
</div>
<div class="ft" style="left:33.80px;top:7.50px;font-size:10.4px;color:#333;transform:scaleX(0.9548);">File</div>
<div class="ft" style="left:62.60px;top:7.50px;font-size:10.4px;color:#333;transform:scaleX(0.9709);">Edit</div>
<div class="ft" style="left:92.80px;top:7.50px;font-size:10.4px;color:#333;transform:scaleX(0.9770);">Selection</div>
<div class="ft" style="left:146.90px;top:7.50px;font-size:10.4px;color:#333;transform:scaleX(1.0065);">View</div>
<div class="ft" style="left:182.00px;top:7.50px;font-size:10.4px;color:#333;transform:scaleX(0.9515);">Go</div>
<div class="ft" style="left:207.70px;top:7.50px;font-size:10.4px;color:#333;transform:scaleX(0.9644);">Run</div>
<div class="ft" style="left:238.70px;top:7.50px;font-size:10.4px;color:#333;transform:scaleX(0.9924);">Terminal</div>
<div class="ft" style="left:290.20px;top:7.50px;font-size:10.4px;color:#333;transform:scaleX(1.0192);">Help</div>
<div class="ft" style="left:643.20px;top:7.00px;font-size:9.6px;color:#333;transform:scaleX(0.8879);">Saaal</div>
<div class="ft" style="left:54.50px;top:34.00px;font-size:8.8px;color:#6f6f6f;transform:scaleX(0.8346);">EXPLORER</div>
<div class="ft" style="left:54.60px;top:57.00px;font-size:8.7px;color:#454545;font-weight:bold;transform:scaleX(0.9423);">OPEN EDITORS</div>
<div class="ft" style="left:125.30px;top:58.00px;font-size:8.8px;color:#333;transform:scaleX(0.9407);">1 unsaved</div>
<div class="ft" style="left:54.60px;top:128.10px;font-size:8.7px;color:#454545;font-weight:bold;transform:scaleX(0.9110);">SAAAL</div>
<div class="ft" style="left:54.60px;top:618.60px;font-size:8.7px;color:#454545;font-weight:bold;transform:scaleX(0.9560);">OUTLINE</div>
<div class="ft" style="left:54.60px;top:636.70px;font-size:8.7px;color:#454545;font-weight:bold;transform:scaleX(0.9754);">TIMELINE</div>
<div class="ft" style="left:54.60px;top:653.80px;font-size:8.7px;color:#454545;font-weight:bold;transform:scaleX(0.9207);">VS CODE PETS</div>
<div class="ft" style="left:47.20px;top:671.90px;font-size:10.2px;color:#fff;transform:scaleX(0.9519);-webkit-text-stroke:0.25px #fff;">0</div>
<div class="ft" style="left:68.90px;top:671.90px;font-size:10.2px;color:#fff;transform:scaleX(0.9519);-webkit-text-stroke:0.25px #fff;">0</div>
<div class="ft" style="left:974.80px;top:671.90px;font-size:9.9px;color:#fff;transform:scaleX(0.9203);-webkit-text-stroke:0.200px #fff;">Ln 63, Col 49</div>
<div class="ft" style="left:1042.20px;top:671.90px;font-size:9.9px;color:#fff;transform:scaleX(0.8813);-webkit-text-stroke:0.200px #fff;">Spaces: 4</div>
<div class="ft" style="left:1094.00px;top:671.90px;font-size:9.9px;color:#fff;transform:scaleX(0.9092);-webkit-text-stroke:0.200px #fff;">UTF-8</div>
<div class="ft" style="left:1131.80px;top:671.90px;font-size:9.9px;color:#fff;transform:scaleX(0.8278);-webkit-text-stroke:0.200px #fff;">CRLF</div>
<div class="ft" style="left:1179.80px;top:671.90px;font-size:9.9px;color:#fff;transform:scaleX(0.8793);-webkit-text-stroke:0.200px #fff;">PHP</div>
</div>
</body>
</html>
